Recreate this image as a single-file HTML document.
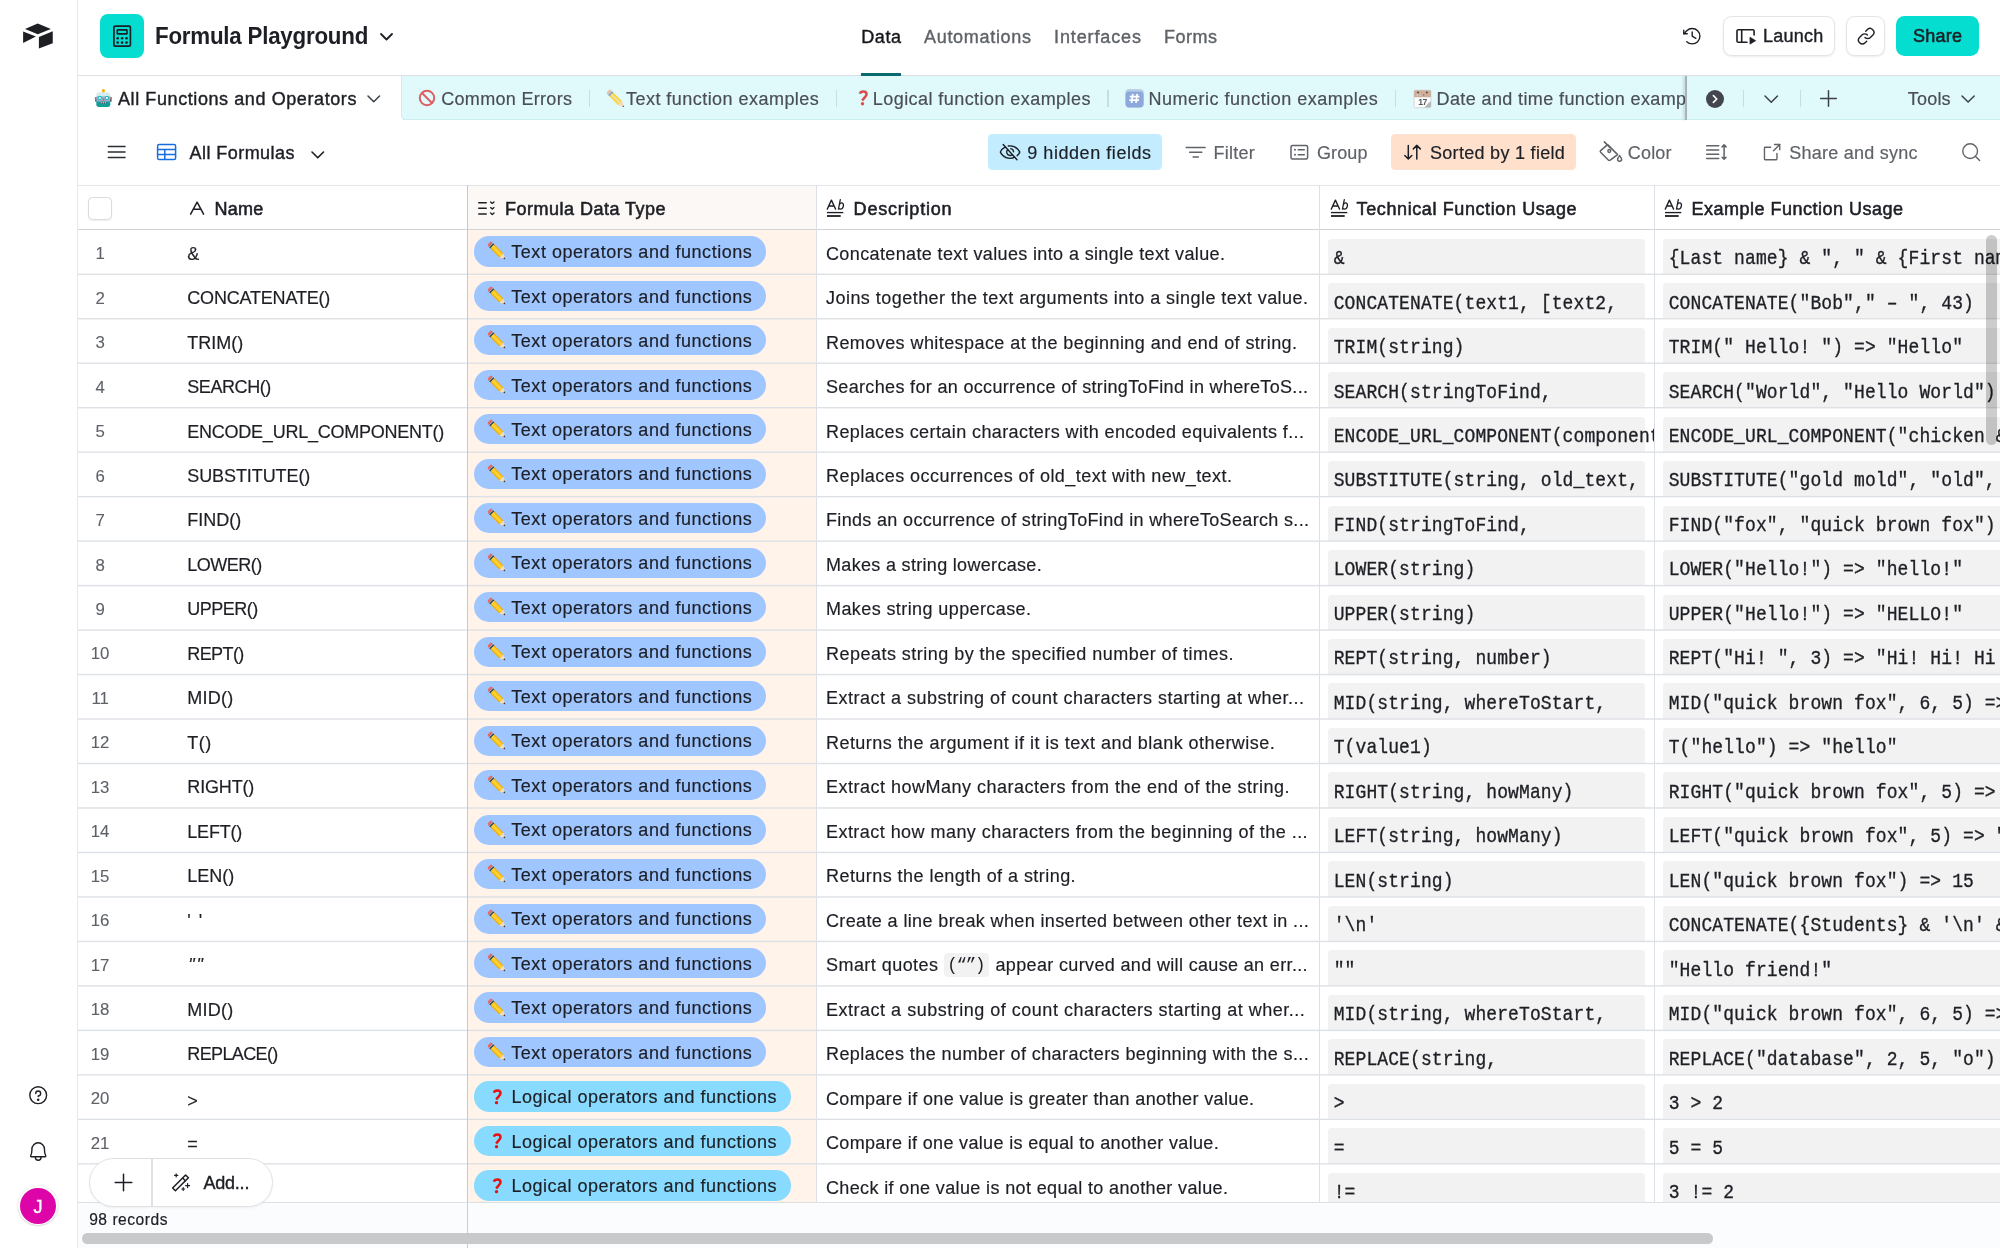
<!DOCTYPE html>
<html><head><meta charset="utf-8"><title>Formula Playground - Airtable</title>
<style>
html,body{margin:0;padding:0;}
body{width:2000px;height:1248px;overflow:hidden;background:#fff;font-family:"Liberation Sans", sans-serif;position:relative;color:#1d1f25;}
.b{position:absolute;box-sizing:border-box;}
.t{position:absolute;white-space:pre;display:block;}
svg{position:absolute;overflow:visible;}
#root{position:absolute;left:0;top:0;width:2000px;height:1248px;will-change:transform;}
</style></head><body><div id="root">
<div class="b" style="left:0.00px;top:0.00px;width:77.90px;height:1248.00px;background:#fff;border-right:1.8px solid #e6e8eb;"></div>
<svg style="left:22.00px;top:22.00px;" width="32.00" height="28.00" viewBox="22 22 32 28"><path d="M25 29 L37.75 23.4 L50.9 29 L37.75 34.3 Z" fill="#1d1f25"/><path d="M23.1 31.6 L35.9 36.6 L23.1 42.9 Z" fill="#1d1f25"/><path d="M38.9 37 L52.75 31.3 L52.75 43.3 L38.9 48.6 Z" fill="#1d1f25"/></svg>
<div class="b" style="left:78.40px;top:75.00px;width:1922.00px;height:1.30px;background:#dcdfe3;"></div>
<div class="b" style="left:100.00px;top:13.70px;width:44.30px;height:44.30px;background:#05ddd1;border-radius:8px;"></div>
<svg style="left:100.00px;top:13.70px;" width="44.30" height="44.30" viewBox="100 13.7 44.3 44.3"><rect x="113.9" y="25.9" width="16.5" height="19.9" rx="1.2" fill="none" stroke="#1d1f25" stroke-width="1.7"/><rect x="117.3" y="29.6" width="9.7" height="4" rx="0.5" fill="none" stroke="#1d1f25" stroke-width="1.6"/><circle cx="117.7" cy="38" r="1.3" fill="#1d1f25"/><circle cx="122.1" cy="38" r="1.3" fill="#1d1f25"/><circle cx="126.5" cy="38" r="1.3" fill="#1d1f25"/><circle cx="117.7" cy="42.3" r="1.3" fill="#1d1f25"/><circle cx="122.1" cy="42.3" r="1.3" fill="#1d1f25"/><circle cx="126.5" cy="42.3" r="1.3" fill="#1d1f25"/></svg>
<span class="t" style="left:155.20px;top:20.43px;height:31px;line-height:31px;font-size:24px;color:#1d1f25;font-weight:700;letter-spacing:-0.250px;transform:scaleX(0.931);transform-origin:0 50%;">Formula Playground</span>
<svg style="left:378.50px;top:31.75px;" width="15.00" height="9.50" viewBox="-7.5 -4.75 15 9.5"><path d="M-5.5 -2.75 L0 2.75 L5.5 -2.75" fill="none" stroke="#1d1f25" stroke-width="1.8" stroke-linecap="round" stroke-linejoin="round"/></svg>
<span class="t" style="left:861.30px;top:25.82px;height:23px;line-height:23px;font-size:18px;color:#14161a;letter-spacing:0.559px;-webkit-text-stroke:0.4px currentColor;">Data</span>
<span class="t" style="left:924.00px;top:25.82px;height:23px;line-height:23px;font-size:18px;color:#5f6368;letter-spacing:0.694px;-webkit-text-stroke:0.4px currentColor;">Automations</span>
<span class="t" style="left:1054.00px;top:25.82px;height:23px;line-height:23px;font-size:18px;color:#5f6368;letter-spacing:0.884px;-webkit-text-stroke:0.4px currentColor;">Interfaces</span>
<span class="t" style="left:1164.00px;top:25.82px;height:23px;line-height:23px;font-size:18px;color:#5f6368;letter-spacing:0.501px;-webkit-text-stroke:0.4px currentColor;">Forms</span>
<div class="b" style="left:861.00px;top:73.00px;width:40.00px;height:2.80px;background:#0a6a6e;"></div>
<svg style="left:1681.20px;top:24.50px;" width="22.40" height="22.40" viewBox="0 0 256 256"><g fill="none" stroke="#1d1f25" stroke-width="16" stroke-linecap="round" stroke-linejoin="round"><polyline points="128 80 128 128 169.6 152"/><polyline points="71.8 99.7 31.8 99.7 31.8 59.7"/><path d="M65.8,190.2a88,88,0,1,0,0-124.4L31.8,99.7"/></g></svg>
<div class="b" style="left:1722.60px;top:15.50px;width:112.80px;height:40.30px;background:#fff;border:1.3px solid #e2e4e8;border-radius:8.5px;box-shadow:0 1px 2px rgba(0,0,0,0.08);"></div>
<svg style="left:1735.00px;top:27.00px;" width="22.00" height="18.00" viewBox="1735 27 22 18"><path d="M1747 42.3 L1738.3 42.3 Q1737 42.3 1737 41 L1737 31 Q1737 29.7 1738.3 29.7 L1752.8 29.7 Q1754.1 29.7 1754.1 31 L1754.1 35" fill="none" stroke="#1d1f25" stroke-width="1.6" stroke-linecap="round" stroke-linejoin="round"/><path d="M1741.7 29.7 L1741.7 42.3" fill="none" stroke="#1d1f25" stroke-width="1.6"/><path d="M1750 37.3 L1755.6 40.7 L1750 44.1 Z" fill="#1d1f25" stroke="#1d1f25" stroke-width="0.8" stroke-linejoin="round"/></svg>
<span class="t" style="left:1763.00px;top:24.92px;height:23px;line-height:23px;font-size:18px;color:#1d1f25;letter-spacing:0.229px;-webkit-text-stroke:0.4px currentColor;">Launch</span>
<div class="b" style="left:1845.70px;top:15.50px;width:39.80px;height:40.30px;background:#fff;border:1.3px solid #e2e4e8;border-radius:8.5px;box-shadow:0 1px 2px rgba(0,0,0,0.08);"></div>
<svg style="left:1854.50px;top:24.80px;" width="22.40" height="22.40" viewBox="0 0 256 256"><g fill="none" stroke="#1d1f25" stroke-width="16" stroke-linecap="round" stroke-linejoin="round"><path d="M122.3,71.4l19.8-19.8a44.1,44.1,0,0,1,62.3,62.3l-28.3,28.2a43.9,43.9,0,0,1-62.2,0"/><path d="M133.7,184.6l-19.8,19.8a44.1,44.1,0,0,1-62.3-62.3l28.3-28.2a43.9,43.9,0,0,1,62.2,0"/></g></svg>
<div class="b" style="left:1896.40px;top:16.00px;width:82.80px;height:39.60px;background:#05ddd1;border-radius:8.5px;"></div>
<span class="t" style="left:1913.00px;top:25.12px;height:23px;line-height:23px;font-size:18px;color:#1d1f25;letter-spacing:0.242px;-webkit-text-stroke:0.55px currentColor;">Share</span>
<div class="b" style="left:78.40px;top:76.30px;width:1922.00px;height:44.20px;background:#e0f9fb;border-bottom:1.3px solid #cbeef1;"></div>
<div class="b" style="left:78.40px;top:76.30px;width:324.20px;height:45.50px;background:#fff;border-top-right-radius:5px;"></div>
<div class="b" style="left:401.40px;top:76.30px;width:6.00px;height:44.20px;background:#e0f9fb;border-left:1.2px solid #cbeef1;border-bottom:1.3px solid #cbeef1;border-bottom-left-radius:5px;"></div>
<span class="t" style="left:118.00px;top:88.32px;height:23px;line-height:23px;font-size:18px;color:#1d1f25;letter-spacing:0.588px;-webkit-text-stroke:0.4px currentColor;">All Functions and Operators</span>
<svg style="left:366.05px;top:93.70px;" width="15.50" height="9.80" viewBox="-7.75 -4.9 15.5 9.8"><path d="M-5.75 -2.9 L0 2.9 L5.75 -2.9" fill="none" stroke="#3c4048" stroke-width="1.5" stroke-linecap="round" stroke-linejoin="round"/></svg>
<span class="t" style="left:441.20px;top:88.32px;height:23px;line-height:23px;font-size:18px;color:#4a4e55;letter-spacing:0.315px;-webkit-text-stroke:0.18px currentColor;">Common Errors</span>
<span class="t" style="left:626.00px;top:88.32px;height:23px;line-height:23px;font-size:18px;color:#4a4e55;letter-spacing:0.462px;-webkit-text-stroke:0.18px currentColor;">Text function examples</span>
<span class="t" style="left:872.80px;top:88.32px;height:23px;line-height:23px;font-size:18px;color:#4a4e55;letter-spacing:0.436px;-webkit-text-stroke:0.18px currentColor;">Logical function examples</span>
<span class="t" style="left:1148.60px;top:88.32px;height:23px;line-height:23px;font-size:18px;color:#4a4e55;letter-spacing:0.500px;-webkit-text-stroke:0.18px currentColor;">Numeric function examples</span>
<div class="b" style="left:1436.00px;top:78.00px;width:251.00px;height:40.00px;overflow:hidden;"><span class="t" style="left:0.60px;top:10.32px;height:23px;line-height:23px;font-size:18px;color:#4a4e55;letter-spacing:0.384px;-webkit-text-stroke:0.18px currentColor;">Date and time function examples</span></div>
<div class="b" style="left:589.00px;top:89.50px;width:1.30px;height:17.00px;background:#c3dfe2;"></div>
<div class="b" style="left:835.80px;top:89.50px;width:1.30px;height:17.00px;background:#c3dfe2;"></div>
<div class="b" style="left:1107.40px;top:89.50px;width:1.30px;height:17.00px;background:#c3dfe2;"></div>
<div class="b" style="left:1395.10px;top:89.50px;width:1.30px;height:17.00px;background:#c3dfe2;"></div>
<div class="b" style="left:1743.00px;top:89.50px;width:1.30px;height:17.00px;background:#c3dfe2;"></div>
<div class="b" style="left:1800.10px;top:89.50px;width:1.30px;height:17.00px;background:#c3dfe2;"></div>
<div class="b" style="left:1684.60px;top:76.30px;width:2.00px;height:44.20px;background:#a9b4b7;box-shadow:-1.5px 0 2.5px rgba(0,0,0,0.16);"></div>
<div class="b" style="left:1705.80px;top:89.80px;width:18.00px;height:18.00px;background:#43464c;border-radius:50%;"></div>
<svg style="left:1705.80px;top:89.80px;" width="18.00" height="18.00" viewBox="-9 -9 18 18"><path d="M-1.6 -3.4 L1.8 0 L-1.6 3.4" fill="none" stroke="#fff" stroke-width="1.6" stroke-linecap="round" stroke-linejoin="round"/></svg>
<svg style="left:1763.25px;top:93.70px;" width="16.50" height="10.20" viewBox="-8.25 -5.1 16.5 10.2"><path d="M-6.25 -3.1 L0 3.1 L6.25 -3.1" fill="none" stroke="#3c4048" stroke-width="1.5" stroke-linecap="round" stroke-linejoin="round"/></svg>
<svg style="left:1818.00px;top:88.30px;" width="21.00" height="21.00" viewBox="-10.5 -10.5 21 21"><path d="M-7.8 0 L7.8 0 M0 -7.8 L0 7.8" stroke="#3c4048" stroke-width="1.5" stroke-linecap="round"/></svg>
<span class="t" style="left:1907.80px;top:88.32px;height:23px;line-height:23px;font-size:18px;color:#4a4e55;letter-spacing:0.195px;-webkit-text-stroke:0.18px currentColor;">Tools</span>
<svg style="left:1960.00px;top:93.75px;" width="16.20" height="10.10" viewBox="-8.1 -5.05 16.2 10.1"><path d="M-6.1 -3.05 L0 3.05 L6.1 -3.05" fill="none" stroke="#3c4048" stroke-width="1.5" stroke-linecap="round" stroke-linejoin="round"/></svg>
<svg style="left:106.00px;top:144.00px;" width="22.00" height="16.00" viewBox="106 144 22 16"><path d="M108.3 146.4 H125 M108.3 152 H125 M108.3 157.6 H125" stroke="#2a2d33" stroke-width="1.5" stroke-linecap="round"/></svg>
<svg style="left:155.00px;top:142.00px;" width="24.00" height="20.00" viewBox="155 142 24 20"><rect x="157.6" y="144.6" width="18" height="15" rx="1.6" fill="none" stroke="#166ee1" stroke-width="1.5"/><path d="M157.6 149.6 H175.6 M157.6 154.6 H175.6 M164.8 149.6 V159.6" stroke="#166ee1" stroke-width="1.5" fill="none"/></svg>
<span class="t" style="left:189.60px;top:141.52px;height:23px;line-height:23px;font-size:18px;color:#1d1f25;letter-spacing:0.435px;-webkit-text-stroke:0.4px currentColor;">All Formulas</span>
<svg style="left:309.75px;top:149.60px;" width="15.50" height="9.80" viewBox="-7.75 -4.9 15.5 9.8"><path d="M-5.75 -2.9 L0 2.9 L5.75 -2.9" fill="none" stroke="#1d1f25" stroke-width="1.6" stroke-linecap="round" stroke-linejoin="round"/></svg>
<div class="b" style="left:988.00px;top:134.00px;width:174.30px;height:35.70px;background:#c4ecff;border-radius:4.5px;"></div>
<svg style="left:999.10px;top:140.90px;" width="22.20" height="22.20" viewBox="0 0 256 256"><g fill="none" stroke="#1d1f25" stroke-width="16" stroke-linecap="round" stroke-linejoin="round"><line x1="48" y1="40" x2="208" y2="216"/><path d="M154.9,157.6A39.6,39.6,0,0,1,128,168a40,40,0,0,1-26.9-69.6"/><path d="M74,68.6C33.2,89.2,16,128,16,128s32,72,112,72a117.9,117.9,0,0,0,54-12.6"/><path d="M208.6,169.1C230.4,149.6,240,128,240,128S208,56,128,56a123.9,123.9,0,0,0-20.7,1.7"/><path d="M135.5,88.7a39.9,39.9,0,0,1,32.3,35.5"/></g></svg>
<span class="t" style="left:1027.20px;top:141.52px;height:23px;line-height:23px;font-size:18px;color:#1d1f25;letter-spacing:0.558px;-webkit-text-stroke:0.18px currentColor;">9 hidden fields</span>
<svg style="left:1184.00px;top:145.00px;" width="24.00" height="14.00" viewBox="1184 145 24 14"><path d="M1186.2 147.4 H1205.1 M1189.6 152.2 H1201.8 M1193.1 156.9 H1198.4" stroke="#5f6368" stroke-width="1.5" stroke-linecap="round"/></svg>
<span class="t" style="left:1213.50px;top:141.52px;height:23px;line-height:23px;font-size:18px;color:#5f6368;letter-spacing:0.240px;-webkit-text-stroke:0.18px currentColor;">Filter</span>
<svg style="left:1288.00px;top:142.00px;" width="22.00" height="20.00" viewBox="1288 142 22 20"><rect x="1291" y="145.4" width="16.6" height="13.6" rx="1.5" fill="none" stroke="#5f6368" stroke-width="1.5"/><path d="M1298.3 149.8 H1304.3 M1298.3 154.7 H1304.3" stroke="#5f6368" stroke-width="1.5" stroke-linecap="round"/><circle cx="1295" cy="149.8" r="1" fill="#5f6368"/><circle cx="1295" cy="154.7" r="1" fill="#5f6368"/></svg>
<span class="t" style="left:1317.00px;top:141.52px;height:23px;line-height:23px;font-size:18px;color:#5f6368;letter-spacing:0.093px;-webkit-text-stroke:0.18px currentColor;">Group</span>
<div class="b" style="left:1390.90px;top:134.00px;width:185.20px;height:35.70px;background:#ffe0cc;border-radius:4.5px;"></div>
<svg style="left:1402.00px;top:143.00px;" width="22.00" height="19.00" viewBox="1402 143 22 19"><path d="M1408.3 145.4 V159 M1404.8 155.5 L1408.3 159 L1411.8 155.5 M1416.8 159 V145.4 M1413.3 148.9 L1416.8 145.4 L1420.3 148.9" fill="none" stroke="#1d1f25" stroke-width="1.5" stroke-linecap="round" stroke-linejoin="round"/></svg>
<span class="t" style="left:1430.00px;top:141.52px;height:23px;line-height:23px;font-size:18px;color:#1d1f25;letter-spacing:0.295px;-webkit-text-stroke:0.18px currentColor;">Sorted by 1 field</span>
<svg style="left:1597.00px;top:140.00px;" width="26.00" height="23.00" viewBox="1597 140 26 23"><g fill="none" stroke="#5f6368" stroke-width="1.5" stroke-linecap="round" stroke-linejoin="round"><path d="M1607.6 144.6 L1617.6 154.6 L1610.2 160.2 Q1609.2 160.9 1608.3 160 L1600.6 152.3 Q1599.8 151.4 1600.6 150.6 Z"/><path d="M1604.3 141.9 L1609.8 147.4"/><circle cx="1609.3" cy="151" r="1.4"/><path d="M1619.6 155.6 Q1621.6 158.2 1621.6 159.3 A2 2 0 0 1 1617.6 159.3 Q1617.6 158.2 1619.6 155.6 Z"/></g></svg>
<span class="t" style="left:1627.80px;top:141.52px;height:23px;line-height:23px;font-size:18px;color:#5f6368;letter-spacing:0.171px;-webkit-text-stroke:0.18px currentColor;">Color</span>
<svg style="left:1704.00px;top:142.00px;" width="26.00" height="20.00" viewBox="1704 142 26 20"><g fill="none" stroke="#5f6368" stroke-width="1.5" stroke-linecap="round" stroke-linejoin="round"><path d="M1706.7 145.8 H1718.7 M1706.7 150 H1718.7 M1706.7 154.2 H1718.7 M1706.7 158.4 H1718.7"/><path d="M1724.1 145 V159.2 M1722.1 146.9 L1724.1 144.9 L1726.1 146.9 M1722.1 157.3 L1724.1 159.3 L1726.1 157.3"/></g></svg>
<svg style="left:1760.90px;top:140.70px;" width="22.20" height="22.20" viewBox="0 0 256 256"><g fill="none" stroke="#5f6368" stroke-width="16" stroke-linecap="round" stroke-linejoin="round"><polyline points="216 100 216 40 156 40"/><line x1="144" y1="112" x2="216" y2="40"/><path d="M184,144v64a8,8,0,0,1-8,8H48a8,8,0,0,1-8-8V80a8,8,0,0,1,8-8h64"/></g></svg>
<span class="t" style="left:1789.20px;top:141.52px;height:23px;line-height:23px;font-size:18px;color:#5f6368;letter-spacing:0.248px;-webkit-text-stroke:0.18px currentColor;">Share and sync</span>
<svg style="left:1959.60px;top:141.40px;" width="22.40" height="22.40" viewBox="0 0 256 256"><g fill="none" stroke="#5f6368" stroke-width="16" stroke-linecap="round" stroke-linejoin="round"><circle cx="116" cy="116" r="84"/><line x1="175.4" y1="175.4" x2="224" y2="224"/></g></svg>
<div class="b" style="left:467.60px;top:185.00px;width:348.80px;height:44.50px;background:#fcf8f6;"></div>
<div class="b" style="left:467.60px;top:229.50px;width:348.80px;height:972.10px;background:#fff3ea;"></div>
<div class="b" style="left:78.40px;top:184.80px;width:1922.00px;height:1.30px;background:#e3e5e8;"></div>
<div class="b" style="left:78.40px;top:228.70px;width:1922.00px;height:1.50px;background:#d1d3d6;"></div>
<div class="b" style="left:88.30px;top:196.50px;width:23.30px;height:23.30px;background:#fff;border:1.3px solid #d8dbe0;border-radius:4.5px;box-shadow:0 1px 1.5px rgba(0,0,0,0.07);"></div>
<svg style="left:188.00px;top:199.00px;" width="18.00" height="18.00" viewBox="188 199 18 18"><path d="M190.6 214.2 L197.1 202.2 L203.6 214.2 M193.3 209.2 H200.9" fill="none" stroke="#1d1f25" stroke-width="1.5" stroke-linecap="round" stroke-linejoin="round"/></svg>
<span class="t" style="left:214.60px;top:198.22px;height:23px;line-height:23px;font-size:18px;color:#1d1f25;letter-spacing:0.195px;-webkit-text-stroke:0.55px currentColor;">Name</span>
<svg style="left:476.00px;top:199.00px;" width="22.00" height="20.00" viewBox="476 199 22 20"><path d="M478.8 202.7 H486.2 M478.8 208.3 H486.2 M478.8 213.9 H486.2" stroke="#1d1f25" stroke-width="1.55" stroke-linecap="round"/><path d="M490.6 201.9 L492.3 203.4 L494 201.9 M490.6 207.6 L492.3 209.1 L494 207.6 M490.6 213 L492.3 214.5 L494 213" fill="none" stroke="#1d1f25" stroke-width="1.35" stroke-linecap="round" stroke-linejoin="round"/></svg>
<span class="t" style="left:505.00px;top:198.32px;height:23px;line-height:23px;font-size:18px;color:#1d1f25;letter-spacing:0.491px;-webkit-text-stroke:0.55px currentColor;">Formula Data Type</span>
<svg style="left:826.00px;top:198.00px;" width="20.00" height="20.00" viewBox="826 198 20 20"><path d="M827.3 209.1 L831.4 200.1 L835.6 209.1 M828.8 206 H834" fill="none" stroke="#1d1f25" stroke-width="1.35" stroke-linejoin="round" stroke-linecap="round"/><path d="M840.3 199.7 L838.5 209 M839.3 204.6 Q840.6 202.6 842.3 203 Q843.9 203.6 843.3 206.3 Q842.6 209.2 840.3 209.1 Q838.9 208.9 838.7 207.6" fill="none" stroke="#1d1f25" stroke-width="1.3" stroke-linejoin="round" stroke-linecap="round"/><rect x="827" y="211.9" width="16.3" height="1.35" fill="#1d1f25"/><rect x="827" y="215.1" width="13.7" height="1.8" fill="#1d1f25"/></svg>
<span class="t" style="left:853.60px;top:198.32px;height:23px;line-height:23px;font-size:18px;color:#1d1f25;letter-spacing:0.796px;-webkit-text-stroke:0.55px currentColor;">Description</span>
<svg style="left:1329.50px;top:198.00px;" width="20.00" height="20.00" viewBox="1329.5 198 20 20"><path d="M1330.8 209.1 L1334.9 200.1 L1339.1 209.1 M1332.3 206 H1337.5" fill="none" stroke="#1d1f25" stroke-width="1.35" stroke-linejoin="round" stroke-linecap="round"/><path d="M1343.8 199.7 L1342.0 209 M1342.8 204.6 Q1344.1 202.6 1345.8 203 Q1347.4 203.6 1346.8 206.3 Q1346.1 209.2 1343.8 209.1 Q1342.4 208.9 1342.2 207.6" fill="none" stroke="#1d1f25" stroke-width="1.3" stroke-linejoin="round" stroke-linecap="round"/><rect x="1330.5" y="211.9" width="16.3" height="1.35" fill="#1d1f25"/><rect x="1330.5" y="215.1" width="13.7" height="1.8" fill="#1d1f25"/></svg>
<span class="t" style="left:1356.60px;top:198.32px;height:23px;line-height:23px;font-size:18px;color:#1d1f25;letter-spacing:0.604px;-webkit-text-stroke:0.55px currentColor;">Technical Function Usage</span>
<svg style="left:1664.00px;top:198.00px;" width="20.00" height="20.00" viewBox="1664 198 20 20"><path d="M1665.3 209.1 L1669.4 200.1 L1673.6 209.1 M1666.8 206 H1672" fill="none" stroke="#1d1f25" stroke-width="1.35" stroke-linejoin="round" stroke-linecap="round"/><path d="M1678.3 199.7 L1676.5 209 M1677.3 204.6 Q1678.6 202.6 1680.3 203 Q1681.9 203.6 1681.3 206.3 Q1680.6 209.2 1678.3 209.1 Q1676.9 208.9 1676.7 207.6" fill="none" stroke="#1d1f25" stroke-width="1.3" stroke-linejoin="round" stroke-linecap="round"/><rect x="1665" y="211.9" width="16.3" height="1.35" fill="#1d1f25"/><rect x="1665" y="215.1" width="13.7" height="1.8" fill="#1d1f25"/></svg>
<span class="t" style="left:1691.60px;top:198.32px;height:23px;line-height:23px;font-size:18px;color:#1d1f25;letter-spacing:0.495px;-webkit-text-stroke:0.55px currentColor;">Example Function Usage</span>
<div class="b" style="left:815.80px;top:185.00px;width:1.30px;height:1016.60px;background:#dbe0e6;"></div>
<div class="b" style="left:1318.80px;top:185.00px;width:1.30px;height:1016.60px;background:#dbe0e6;"></div>
<div class="b" style="left:1653.80px;top:185.00px;width:1.30px;height:1016.60px;background:#dbe0e6;"></div>
<div class="b" style="left:0.00px;top:0.00px;width:2000.00px;height:1201.60px;overflow:hidden;"><span class="t" style="left:100.10px;top:243.18px;height:22px;line-height:22px;font-size:16.8px;color:#5d6168;transform:translateX(-50%);-webkit-text-stroke:0.1px currentColor;">1</span><span class="t" style="left:187.30px;top:242.60px;height:23px;line-height:23px;font-size:18px;color:#1d1f25;-webkit-text-stroke:0.18px currentColor;">&amp;</span><div class="b" style="left:474.00px;top:236.33px;width:292.40px;height:30.20px;background:#a0c6ff;border-radius:15.1px;"></div><svg style="left:486.90px;top:241.48px;" width="20.00" height="20.00" viewBox="-10 -10 20 20"><g transform="scale(1.04)"><g transform="rotate(-45)"><rect x="-2.7" y="-10.8" width="5.4" height="3" rx="1.4" fill="#e96a63"/><rect x="-2.7" y="-8.6" width="5.4" height="2.4" fill="#41474f"/><rect x="-2.7" y="-8.6" width="5.4" height="0.9" fill="#a9bccc"/><rect x="-2.7" y="-6.2" width="5.4" height="12.2" fill="#f2ae00"/><rect x="-1.5" y="-6.2" width="3" height="12.2" fill="#ffd033"/><path d="M-2.7 6 L0 11.4 L2.7 6 Z" fill="#f7dcae"/><path d="M-1 9.4 L0 11.4 L1 9.4 Z" fill="#33363b"/></g></g></svg><span class="t" style="left:511.30px;top:241.10px;height:23px;line-height:23px;font-size:18px;color:#1d1f25;letter-spacing:0.532px;-webkit-text-stroke:0.18px currentColor;">Text operators and functions</span><span class="t" style="left:826.00px;top:242.60px;height:23px;line-height:23px;font-size:18px;color:#1d1f25;letter-spacing:0.370px;-webkit-text-stroke:0.18px currentColor;">Concatenate text values into a single text value.</span><div class="b" style="left:1328.40px;top:238.68px;width:317.00px;height:35.58px;background:#f2f2f2;border-radius:3.5px 3.5px 0 0;overflow:hidden;"></div><div class="b" style="left:1328.40px;top:238.68px;width:325.40px;height:35.58px;overflow:hidden;"><span class="t" style="left:5.30px;top:9.42px;height:23px;line-height:23px;font-size:18px;color:#1d1f25;font-family:'Liberation Mono', monospace;letter-spacing:0.100px;-webkit-text-stroke:0.3px currentColor;transform:scaleY(1.1);transform-origin:0 50%;">&amp;</span></div><div class="b" style="left:1663.20px;top:238.68px;width:336.80px;height:35.58px;background:#f2f2f2;border-radius:3.5px 0 0 0;overflow:hidden;"><span class="t" style="left:5.50px;top:9.42px;height:23px;line-height:23px;font-size:18px;color:#1d1f25;font-family:'Liberation Mono', monospace;letter-spacing:0.100px;-webkit-text-stroke:0.3px currentColor;transform:scaleY(1.1);transform-origin:0 50%;">{Last name} &amp; ", " &amp; {First name}</span></div>
<span class="t" style="left:100.10px;top:287.66px;height:22px;line-height:22px;font-size:16.8px;color:#5d6168;transform:translateX(-50%);-webkit-text-stroke:0.1px currentColor;">2</span><span class="t" style="left:187.30px;top:287.08px;height:23px;line-height:23px;font-size:18px;color:#1d1f25;letter-spacing:-0.194px;-webkit-text-stroke:0.18px currentColor;">CONCATENATE()</span><div class="b" style="left:474.00px;top:280.81px;width:292.40px;height:30.20px;background:#a0c6ff;border-radius:15.1px;"></div><svg style="left:486.90px;top:285.96px;" width="20.00" height="20.00" viewBox="-10 -10 20 20"><g transform="scale(1.04)"><g transform="rotate(-45)"><rect x="-2.7" y="-10.8" width="5.4" height="3" rx="1.4" fill="#e96a63"/><rect x="-2.7" y="-8.6" width="5.4" height="2.4" fill="#41474f"/><rect x="-2.7" y="-8.6" width="5.4" height="0.9" fill="#a9bccc"/><rect x="-2.7" y="-6.2" width="5.4" height="12.2" fill="#f2ae00"/><rect x="-1.5" y="-6.2" width="3" height="12.2" fill="#ffd033"/><path d="M-2.7 6 L0 11.4 L2.7 6 Z" fill="#f7dcae"/><path d="M-1 9.4 L0 11.4 L1 9.4 Z" fill="#33363b"/></g></g></svg><span class="t" style="left:511.30px;top:285.58px;height:23px;line-height:23px;font-size:18px;color:#1d1f25;letter-spacing:0.532px;-webkit-text-stroke:0.18px currentColor;">Text operators and functions</span><span class="t" style="left:826.00px;top:287.08px;height:23px;line-height:23px;font-size:18px;color:#1d1f25;letter-spacing:0.461px;-webkit-text-stroke:0.18px currentColor;">Joins together the text arguments into a single text value.</span><div class="b" style="left:1328.40px;top:283.16px;width:317.00px;height:35.58px;background:#f2f2f2;border-radius:3.5px 3.5px 0 0;overflow:hidden;"></div><div class="b" style="left:1328.40px;top:283.16px;width:325.40px;height:35.58px;overflow:hidden;"><span class="t" style="left:5.30px;top:9.42px;height:23px;line-height:23px;font-size:18px;color:#1d1f25;font-family:'Liberation Mono', monospace;letter-spacing:0.100px;-webkit-text-stroke:0.3px currentColor;transform:scaleY(1.1);transform-origin:0 50%;">CONCATENATE(text1, [text2,</span></div><div class="b" style="left:1663.20px;top:283.16px;width:336.80px;height:35.58px;background:#f2f2f2;border-radius:3.5px 0 0 0;overflow:hidden;"><span class="t" style="left:5.50px;top:9.42px;height:23px;line-height:23px;font-size:18px;color:#1d1f25;font-family:'Liberation Mono', monospace;letter-spacing:0.100px;-webkit-text-stroke:0.3px currentColor;transform:scaleY(1.1);transform-origin:0 50%;">CONCATENATE("Bob"," – ", 43)</span></div>
<span class="t" style="left:100.10px;top:332.14px;height:22px;line-height:22px;font-size:16.8px;color:#5d6168;transform:translateX(-50%);-webkit-text-stroke:0.1px currentColor;">3</span><span class="t" style="left:187.30px;top:331.56px;height:23px;line-height:23px;font-size:18px;color:#1d1f25;letter-spacing:0.004px;-webkit-text-stroke:0.18px currentColor;">TRIM()</span><div class="b" style="left:474.00px;top:325.29px;width:292.40px;height:30.20px;background:#a0c6ff;border-radius:15.1px;"></div><svg style="left:486.90px;top:330.44px;" width="20.00" height="20.00" viewBox="-10 -10 20 20"><g transform="scale(1.04)"><g transform="rotate(-45)"><rect x="-2.7" y="-10.8" width="5.4" height="3" rx="1.4" fill="#e96a63"/><rect x="-2.7" y="-8.6" width="5.4" height="2.4" fill="#41474f"/><rect x="-2.7" y="-8.6" width="5.4" height="0.9" fill="#a9bccc"/><rect x="-2.7" y="-6.2" width="5.4" height="12.2" fill="#f2ae00"/><rect x="-1.5" y="-6.2" width="3" height="12.2" fill="#ffd033"/><path d="M-2.7 6 L0 11.4 L2.7 6 Z" fill="#f7dcae"/><path d="M-1 9.4 L0 11.4 L1 9.4 Z" fill="#33363b"/></g></g></svg><span class="t" style="left:511.30px;top:330.06px;height:23px;line-height:23px;font-size:18px;color:#1d1f25;letter-spacing:0.532px;-webkit-text-stroke:0.18px currentColor;">Text operators and functions</span><span class="t" style="left:826.00px;top:331.56px;height:23px;line-height:23px;font-size:18px;color:#1d1f25;letter-spacing:0.429px;-webkit-text-stroke:0.18px currentColor;">Removes whitespace at the beginning and end of string.</span><div class="b" style="left:1328.40px;top:327.64px;width:317.00px;height:35.58px;background:#f2f2f2;border-radius:3.5px 3.5px 0 0;overflow:hidden;"></div><div class="b" style="left:1328.40px;top:327.64px;width:325.40px;height:35.58px;overflow:hidden;"><span class="t" style="left:5.30px;top:9.42px;height:23px;line-height:23px;font-size:18px;color:#1d1f25;font-family:'Liberation Mono', monospace;letter-spacing:0.100px;-webkit-text-stroke:0.3px currentColor;transform:scaleY(1.1);transform-origin:0 50%;">TRIM(string)</span></div><div class="b" style="left:1663.20px;top:327.64px;width:336.80px;height:35.58px;background:#f2f2f2;border-radius:3.5px 0 0 0;overflow:hidden;"><span class="t" style="left:5.50px;top:9.42px;height:23px;line-height:23px;font-size:18px;color:#1d1f25;font-family:'Liberation Mono', monospace;letter-spacing:0.100px;-webkit-text-stroke:0.3px currentColor;transform:scaleY(1.1);transform-origin:0 50%;">TRIM(" Hello! ") =&gt; "Hello"</span></div>
<span class="t" style="left:100.10px;top:376.62px;height:22px;line-height:22px;font-size:16.8px;color:#5d6168;transform:translateX(-50%);-webkit-text-stroke:0.1px currentColor;">4</span><span class="t" style="left:187.30px;top:376.04px;height:23px;line-height:23px;font-size:18px;color:#1d1f25;letter-spacing:-0.429px;-webkit-text-stroke:0.18px currentColor;">SEARCH()</span><div class="b" style="left:474.00px;top:369.76px;width:292.40px;height:30.20px;background:#a0c6ff;border-radius:15.1px;"></div><svg style="left:486.90px;top:374.91px;" width="20.00" height="20.00" viewBox="-10 -10 20 20"><g transform="scale(1.04)"><g transform="rotate(-45)"><rect x="-2.7" y="-10.8" width="5.4" height="3" rx="1.4" fill="#e96a63"/><rect x="-2.7" y="-8.6" width="5.4" height="2.4" fill="#41474f"/><rect x="-2.7" y="-8.6" width="5.4" height="0.9" fill="#a9bccc"/><rect x="-2.7" y="-6.2" width="5.4" height="12.2" fill="#f2ae00"/><rect x="-1.5" y="-6.2" width="3" height="12.2" fill="#ffd033"/><path d="M-2.7 6 L0 11.4 L2.7 6 Z" fill="#f7dcae"/><path d="M-1 9.4 L0 11.4 L1 9.4 Z" fill="#33363b"/></g></g></svg><span class="t" style="left:511.30px;top:374.54px;height:23px;line-height:23px;font-size:18px;color:#1d1f25;letter-spacing:0.532px;-webkit-text-stroke:0.18px currentColor;">Text operators and functions</span><span class="t" style="left:826.00px;top:376.04px;height:23px;line-height:23px;font-size:18px;color:#1d1f25;letter-spacing:0.335px;-webkit-text-stroke:0.18px currentColor;">Searches for an occurrence of stringToFind in whereToS...</span><div class="b" style="left:1328.40px;top:372.11px;width:317.00px;height:35.58px;background:#f2f2f2;border-radius:3.5px 3.5px 0 0;overflow:hidden;"></div><div class="b" style="left:1328.40px;top:372.11px;width:325.40px;height:35.58px;overflow:hidden;"><span class="t" style="left:5.30px;top:9.42px;height:23px;line-height:23px;font-size:18px;color:#1d1f25;font-family:'Liberation Mono', monospace;letter-spacing:0.100px;-webkit-text-stroke:0.3px currentColor;transform:scaleY(1.1);transform-origin:0 50%;">SEARCH(stringToFind,</span></div><div class="b" style="left:1663.20px;top:372.11px;width:336.80px;height:35.58px;background:#f2f2f2;border-radius:3.5px 0 0 0;overflow:hidden;"><span class="t" style="left:5.50px;top:9.42px;height:23px;line-height:23px;font-size:18px;color:#1d1f25;font-family:'Liberation Mono', monospace;letter-spacing:0.100px;-webkit-text-stroke:0.3px currentColor;transform:scaleY(1.1);transform-origin:0 50%;">SEARCH("World", "Hello World") =&gt; 7</span></div>
<span class="t" style="left:100.10px;top:421.09px;height:22px;line-height:22px;font-size:16.8px;color:#5d6168;transform:translateX(-50%);-webkit-text-stroke:0.1px currentColor;">5</span><span class="t" style="left:187.30px;top:420.52px;height:23px;line-height:23px;font-size:18px;color:#1d1f25;letter-spacing:-0.240px;-webkit-text-stroke:0.18px currentColor;">ENCODE_URL_COMPONENT()</span><div class="b" style="left:474.00px;top:414.24px;width:292.40px;height:30.20px;background:#a0c6ff;border-radius:15.1px;"></div><svg style="left:486.90px;top:419.39px;" width="20.00" height="20.00" viewBox="-10 -10 20 20"><g transform="scale(1.04)"><g transform="rotate(-45)"><rect x="-2.7" y="-10.8" width="5.4" height="3" rx="1.4" fill="#e96a63"/><rect x="-2.7" y="-8.6" width="5.4" height="2.4" fill="#41474f"/><rect x="-2.7" y="-8.6" width="5.4" height="0.9" fill="#a9bccc"/><rect x="-2.7" y="-6.2" width="5.4" height="12.2" fill="#f2ae00"/><rect x="-1.5" y="-6.2" width="3" height="12.2" fill="#ffd033"/><path d="M-2.7 6 L0 11.4 L2.7 6 Z" fill="#f7dcae"/><path d="M-1 9.4 L0 11.4 L1 9.4 Z" fill="#33363b"/></g></g></svg><span class="t" style="left:511.30px;top:419.02px;height:23px;line-height:23px;font-size:18px;color:#1d1f25;letter-spacing:0.532px;-webkit-text-stroke:0.18px currentColor;">Text operators and functions</span><span class="t" style="left:826.00px;top:420.52px;height:23px;line-height:23px;font-size:18px;color:#1d1f25;letter-spacing:0.406px;-webkit-text-stroke:0.18px currentColor;">Replaces certain characters with encoded equivalents f...</span><div class="b" style="left:1328.40px;top:416.59px;width:317.00px;height:35.58px;background:#f2f2f2;border-radius:3.5px 3.5px 0 0;overflow:hidden;"></div><div class="b" style="left:1328.40px;top:416.59px;width:325.40px;height:35.58px;overflow:hidden;"><span class="t" style="left:5.30px;top:9.42px;height:23px;line-height:23px;font-size:18px;color:#1d1f25;font-family:'Liberation Mono', monospace;letter-spacing:0.100px;-webkit-text-stroke:0.3px currentColor;transform:scaleY(1.1);transform-origin:0 50%;">ENCODE_URL_COMPONENT(component_string)</span></div><div class="b" style="left:1663.20px;top:416.59px;width:336.80px;height:35.58px;background:#f2f2f2;border-radius:3.5px 0 0 0;overflow:hidden;"><span class="t" style="left:5.50px;top:9.42px;height:23px;line-height:23px;font-size:18px;color:#1d1f25;font-family:'Liberation Mono', monospace;letter-spacing:0.100px;-webkit-text-stroke:0.3px currentColor;transform:scaleY(1.1);transform-origin:0 50%;">ENCODE_URL_COMPONENT("chicken &amp; waffles")</span></div>
<span class="t" style="left:100.10px;top:465.57px;height:22px;line-height:22px;font-size:16.8px;color:#5d6168;transform:translateX(-50%);-webkit-text-stroke:0.1px currentColor;">6</span><span class="t" style="left:187.30px;top:464.99px;height:23px;line-height:23px;font-size:18px;color:#1d1f25;letter-spacing:-0.091px;-webkit-text-stroke:0.18px currentColor;">SUBSTITUTE()</span><div class="b" style="left:474.00px;top:458.72px;width:292.40px;height:30.20px;background:#a0c6ff;border-radius:15.1px;"></div><svg style="left:486.90px;top:463.87px;" width="20.00" height="20.00" viewBox="-10 -10 20 20"><g transform="scale(1.04)"><g transform="rotate(-45)"><rect x="-2.7" y="-10.8" width="5.4" height="3" rx="1.4" fill="#e96a63"/><rect x="-2.7" y="-8.6" width="5.4" height="2.4" fill="#41474f"/><rect x="-2.7" y="-8.6" width="5.4" height="0.9" fill="#a9bccc"/><rect x="-2.7" y="-6.2" width="5.4" height="12.2" fill="#f2ae00"/><rect x="-1.5" y="-6.2" width="3" height="12.2" fill="#ffd033"/><path d="M-2.7 6 L0 11.4 L2.7 6 Z" fill="#f7dcae"/><path d="M-1 9.4 L0 11.4 L1 9.4 Z" fill="#33363b"/></g></g></svg><span class="t" style="left:511.30px;top:463.49px;height:23px;line-height:23px;font-size:18px;color:#1d1f25;letter-spacing:0.532px;-webkit-text-stroke:0.18px currentColor;">Text operators and functions</span><span class="t" style="left:826.00px;top:464.99px;height:23px;line-height:23px;font-size:18px;color:#1d1f25;letter-spacing:0.452px;-webkit-text-stroke:0.18px currentColor;">Replaces occurrences of old_text with new_text.</span><div class="b" style="left:1328.40px;top:461.07px;width:317.00px;height:35.58px;background:#f2f2f2;border-radius:3.5px 3.5px 0 0;overflow:hidden;"></div><div class="b" style="left:1328.40px;top:461.07px;width:325.40px;height:35.58px;overflow:hidden;"><span class="t" style="left:5.30px;top:9.42px;height:23px;line-height:23px;font-size:18px;color:#1d1f25;font-family:'Liberation Mono', monospace;letter-spacing:0.100px;-webkit-text-stroke:0.3px currentColor;transform:scaleY(1.1);transform-origin:0 50%;">SUBSTITUTE(string, old_text,</span></div><div class="b" style="left:1663.20px;top:461.07px;width:336.80px;height:35.58px;background:#f2f2f2;border-radius:3.5px 0 0 0;overflow:hidden;"><span class="t" style="left:5.50px;top:9.42px;height:23px;line-height:23px;font-size:18px;color:#1d1f25;font-family:'Liberation Mono', monospace;letter-spacing:0.100px;-webkit-text-stroke:0.3px currentColor;transform:scaleY(1.1);transform-origin:0 50%;">SUBSTITUTE("gold mold", "old", "ew")</span></div>
<span class="t" style="left:100.10px;top:510.05px;height:22px;line-height:22px;font-size:16.8px;color:#5d6168;transform:translateX(-50%);-webkit-text-stroke:0.1px currentColor;">7</span><span class="t" style="left:187.30px;top:509.47px;height:23px;line-height:23px;font-size:18px;color:#1d1f25;letter-spacing:0.003px;-webkit-text-stroke:0.18px currentColor;">FIND()</span><div class="b" style="left:474.00px;top:503.20px;width:292.40px;height:30.20px;background:#a0c6ff;border-radius:15.1px;"></div><svg style="left:486.90px;top:508.35px;" width="20.00" height="20.00" viewBox="-10 -10 20 20"><g transform="scale(1.04)"><g transform="rotate(-45)"><rect x="-2.7" y="-10.8" width="5.4" height="3" rx="1.4" fill="#e96a63"/><rect x="-2.7" y="-8.6" width="5.4" height="2.4" fill="#41474f"/><rect x="-2.7" y="-8.6" width="5.4" height="0.9" fill="#a9bccc"/><rect x="-2.7" y="-6.2" width="5.4" height="12.2" fill="#f2ae00"/><rect x="-1.5" y="-6.2" width="3" height="12.2" fill="#ffd033"/><path d="M-2.7 6 L0 11.4 L2.7 6 Z" fill="#f7dcae"/><path d="M-1 9.4 L0 11.4 L1 9.4 Z" fill="#33363b"/></g></g></svg><span class="t" style="left:511.30px;top:507.97px;height:23px;line-height:23px;font-size:18px;color:#1d1f25;letter-spacing:0.532px;-webkit-text-stroke:0.18px currentColor;">Text operators and functions</span><span class="t" style="left:826.00px;top:509.47px;height:23px;line-height:23px;font-size:18px;color:#1d1f25;letter-spacing:0.335px;-webkit-text-stroke:0.18px currentColor;">Finds an occurrence of stringToFind in whereToSearch s...</span><div class="b" style="left:1328.40px;top:505.55px;width:317.00px;height:35.58px;background:#f2f2f2;border-radius:3.5px 3.5px 0 0;overflow:hidden;"></div><div class="b" style="left:1328.40px;top:505.55px;width:325.40px;height:35.58px;overflow:hidden;"><span class="t" style="left:5.30px;top:9.42px;height:23px;line-height:23px;font-size:18px;color:#1d1f25;font-family:'Liberation Mono', monospace;letter-spacing:0.100px;-webkit-text-stroke:0.3px currentColor;transform:scaleY(1.1);transform-origin:0 50%;">FIND(stringToFind,</span></div><div class="b" style="left:1663.20px;top:505.55px;width:336.80px;height:35.58px;background:#f2f2f2;border-radius:3.5px 0 0 0;overflow:hidden;"><span class="t" style="left:5.50px;top:9.42px;height:23px;line-height:23px;font-size:18px;color:#1d1f25;font-family:'Liberation Mono', monospace;letter-spacing:0.100px;-webkit-text-stroke:0.3px currentColor;transform:scaleY(1.1);transform-origin:0 50%;">FIND("fox", "quick brown fox") =&gt; 13</span></div>
<span class="t" style="left:100.10px;top:554.53px;height:22px;line-height:22px;font-size:16.8px;color:#5d6168;transform:translateX(-50%);-webkit-text-stroke:0.1px currentColor;">8</span><span class="t" style="left:187.30px;top:553.95px;height:23px;line-height:23px;font-size:18px;color:#1d1f25;letter-spacing:-0.499px;-webkit-text-stroke:0.18px currentColor;">LOWER()</span><div class="b" style="left:474.00px;top:547.68px;width:292.40px;height:30.20px;background:#a0c6ff;border-radius:15.1px;"></div><svg style="left:486.90px;top:552.83px;" width="20.00" height="20.00" viewBox="-10 -10 20 20"><g transform="scale(1.04)"><g transform="rotate(-45)"><rect x="-2.7" y="-10.8" width="5.4" height="3" rx="1.4" fill="#e96a63"/><rect x="-2.7" y="-8.6" width="5.4" height="2.4" fill="#41474f"/><rect x="-2.7" y="-8.6" width="5.4" height="0.9" fill="#a9bccc"/><rect x="-2.7" y="-6.2" width="5.4" height="12.2" fill="#f2ae00"/><rect x="-1.5" y="-6.2" width="3" height="12.2" fill="#ffd033"/><path d="M-2.7 6 L0 11.4 L2.7 6 Z" fill="#f7dcae"/><path d="M-1 9.4 L0 11.4 L1 9.4 Z" fill="#33363b"/></g></g></svg><span class="t" style="left:511.30px;top:552.45px;height:23px;line-height:23px;font-size:18px;color:#1d1f25;letter-spacing:0.532px;-webkit-text-stroke:0.18px currentColor;">Text operators and functions</span><span class="t" style="left:826.00px;top:553.95px;height:23px;line-height:23px;font-size:18px;color:#1d1f25;letter-spacing:0.317px;-webkit-text-stroke:0.18px currentColor;">Makes a string lowercase.</span><div class="b" style="left:1328.40px;top:550.03px;width:317.00px;height:35.58px;background:#f2f2f2;border-radius:3.5px 3.5px 0 0;overflow:hidden;"></div><div class="b" style="left:1328.40px;top:550.03px;width:325.40px;height:35.58px;overflow:hidden;"><span class="t" style="left:5.30px;top:9.42px;height:23px;line-height:23px;font-size:18px;color:#1d1f25;font-family:'Liberation Mono', monospace;letter-spacing:0.100px;-webkit-text-stroke:0.3px currentColor;transform:scaleY(1.1);transform-origin:0 50%;">LOWER(string)</span></div><div class="b" style="left:1663.20px;top:550.03px;width:336.80px;height:35.58px;background:#f2f2f2;border-radius:3.5px 0 0 0;overflow:hidden;"><span class="t" style="left:5.50px;top:9.42px;height:23px;line-height:23px;font-size:18px;color:#1d1f25;font-family:'Liberation Mono', monospace;letter-spacing:0.100px;-webkit-text-stroke:0.3px currentColor;transform:scaleY(1.1);transform-origin:0 50%;">LOWER("Hello!") =&gt; "hello!"</span></div>
<span class="t" style="left:100.10px;top:599.01px;height:22px;line-height:22px;font-size:16.8px;color:#5d6168;transform:translateX(-50%);-webkit-text-stroke:0.1px currentColor;">9</span><span class="t" style="left:187.30px;top:598.43px;height:23px;line-height:23px;font-size:18px;color:#1d1f25;letter-spacing:-0.501px;-webkit-text-stroke:0.18px currentColor;">UPPER()</span><div class="b" style="left:474.00px;top:592.15px;width:292.40px;height:30.20px;background:#a0c6ff;border-radius:15.1px;"></div><svg style="left:486.90px;top:597.30px;" width="20.00" height="20.00" viewBox="-10 -10 20 20"><g transform="scale(1.04)"><g transform="rotate(-45)"><rect x="-2.7" y="-10.8" width="5.4" height="3" rx="1.4" fill="#e96a63"/><rect x="-2.7" y="-8.6" width="5.4" height="2.4" fill="#41474f"/><rect x="-2.7" y="-8.6" width="5.4" height="0.9" fill="#a9bccc"/><rect x="-2.7" y="-6.2" width="5.4" height="12.2" fill="#f2ae00"/><rect x="-1.5" y="-6.2" width="3" height="12.2" fill="#ffd033"/><path d="M-2.7 6 L0 11.4 L2.7 6 Z" fill="#f7dcae"/><path d="M-1 9.4 L0 11.4 L1 9.4 Z" fill="#33363b"/></g></g></svg><span class="t" style="left:511.30px;top:596.93px;height:23px;line-height:23px;font-size:18px;color:#1d1f25;letter-spacing:0.532px;-webkit-text-stroke:0.18px currentColor;">Text operators and functions</span><span class="t" style="left:826.00px;top:598.43px;height:23px;line-height:23px;font-size:18px;color:#1d1f25;letter-spacing:0.405px;-webkit-text-stroke:0.18px currentColor;">Makes string uppercase.</span><div class="b" style="left:1328.40px;top:594.50px;width:317.00px;height:35.58px;background:#f2f2f2;border-radius:3.5px 3.5px 0 0;overflow:hidden;"></div><div class="b" style="left:1328.40px;top:594.50px;width:325.40px;height:35.58px;overflow:hidden;"><span class="t" style="left:5.30px;top:9.42px;height:23px;line-height:23px;font-size:18px;color:#1d1f25;font-family:'Liberation Mono', monospace;letter-spacing:0.100px;-webkit-text-stroke:0.3px currentColor;transform:scaleY(1.1);transform-origin:0 50%;">UPPER(string)</span></div><div class="b" style="left:1663.20px;top:594.50px;width:336.80px;height:35.58px;background:#f2f2f2;border-radius:3.5px 0 0 0;overflow:hidden;"><span class="t" style="left:5.50px;top:9.42px;height:23px;line-height:23px;font-size:18px;color:#1d1f25;font-family:'Liberation Mono', monospace;letter-spacing:0.100px;-webkit-text-stroke:0.3px currentColor;transform:scaleY(1.1);transform-origin:0 50%;">UPPER("Hello!") =&gt; "HELLO!"</span></div>
<span class="t" style="left:100.10px;top:643.48px;height:22px;line-height:22px;font-size:16.8px;color:#5d6168;transform:translateX(-50%);-webkit-text-stroke:0.1px currentColor;">10</span><span class="t" style="left:187.30px;top:642.91px;height:23px;line-height:23px;font-size:18px;color:#1d1f25;letter-spacing:-0.599px;-webkit-text-stroke:0.18px currentColor;">REPT()</span><div class="b" style="left:474.00px;top:636.63px;width:292.40px;height:30.20px;background:#a0c6ff;border-radius:15.1px;"></div><svg style="left:486.90px;top:641.78px;" width="20.00" height="20.00" viewBox="-10 -10 20 20"><g transform="scale(1.04)"><g transform="rotate(-45)"><rect x="-2.7" y="-10.8" width="5.4" height="3" rx="1.4" fill="#e96a63"/><rect x="-2.7" y="-8.6" width="5.4" height="2.4" fill="#41474f"/><rect x="-2.7" y="-8.6" width="5.4" height="0.9" fill="#a9bccc"/><rect x="-2.7" y="-6.2" width="5.4" height="12.2" fill="#f2ae00"/><rect x="-1.5" y="-6.2" width="3" height="12.2" fill="#ffd033"/><path d="M-2.7 6 L0 11.4 L2.7 6 Z" fill="#f7dcae"/><path d="M-1 9.4 L0 11.4 L1 9.4 Z" fill="#33363b"/></g></g></svg><span class="t" style="left:511.30px;top:641.41px;height:23px;line-height:23px;font-size:18px;color:#1d1f25;letter-spacing:0.532px;-webkit-text-stroke:0.18px currentColor;">Text operators and functions</span><span class="t" style="left:826.00px;top:642.91px;height:23px;line-height:23px;font-size:18px;color:#1d1f25;letter-spacing:0.473px;-webkit-text-stroke:0.18px currentColor;">Repeats string by the specified number of times.</span><div class="b" style="left:1328.40px;top:638.98px;width:317.00px;height:35.58px;background:#f2f2f2;border-radius:3.5px 3.5px 0 0;overflow:hidden;"></div><div class="b" style="left:1328.40px;top:638.98px;width:325.40px;height:35.58px;overflow:hidden;"><span class="t" style="left:5.30px;top:9.42px;height:23px;line-height:23px;font-size:18px;color:#1d1f25;font-family:'Liberation Mono', monospace;letter-spacing:0.100px;-webkit-text-stroke:0.3px currentColor;transform:scaleY(1.1);transform-origin:0 50%;">REPT(string, number)</span></div><div class="b" style="left:1663.20px;top:638.98px;width:336.80px;height:35.58px;background:#f2f2f2;border-radius:3.5px 0 0 0;overflow:hidden;"><span class="t" style="left:5.50px;top:9.42px;height:23px;line-height:23px;font-size:18px;color:#1d1f25;font-family:'Liberation Mono', monospace;letter-spacing:0.100px;-webkit-text-stroke:0.3px currentColor;transform:scaleY(1.1);transform-origin:0 50%;">REPT("Hi! ", 3) =&gt; "Hi! Hi! Hi! "</span></div>
<span class="t" style="left:100.10px;top:687.96px;height:22px;line-height:22px;font-size:16.8px;color:#5d6168;transform:translateX(-50%);-webkit-text-stroke:0.1px currentColor;">11</span><span class="t" style="left:187.30px;top:687.38px;height:23px;line-height:23px;font-size:18px;color:#1d1f25;letter-spacing:0.254px;-webkit-text-stroke:0.18px currentColor;">MID()</span><div class="b" style="left:474.00px;top:681.11px;width:292.40px;height:30.20px;background:#a0c6ff;border-radius:15.1px;"></div><svg style="left:486.90px;top:686.26px;" width="20.00" height="20.00" viewBox="-10 -10 20 20"><g transform="scale(1.04)"><g transform="rotate(-45)"><rect x="-2.7" y="-10.8" width="5.4" height="3" rx="1.4" fill="#e96a63"/><rect x="-2.7" y="-8.6" width="5.4" height="2.4" fill="#41474f"/><rect x="-2.7" y="-8.6" width="5.4" height="0.9" fill="#a9bccc"/><rect x="-2.7" y="-6.2" width="5.4" height="12.2" fill="#f2ae00"/><rect x="-1.5" y="-6.2" width="3" height="12.2" fill="#ffd033"/><path d="M-2.7 6 L0 11.4 L2.7 6 Z" fill="#f7dcae"/><path d="M-1 9.4 L0 11.4 L1 9.4 Z" fill="#33363b"/></g></g></svg><span class="t" style="left:511.30px;top:685.88px;height:23px;line-height:23px;font-size:18px;color:#1d1f25;letter-spacing:0.532px;-webkit-text-stroke:0.18px currentColor;">Text operators and functions</span><span class="t" style="left:826.00px;top:687.38px;height:23px;line-height:23px;font-size:18px;color:#1d1f25;letter-spacing:0.496px;-webkit-text-stroke:0.18px currentColor;">Extract a substring of count characters starting at wher...</span><div class="b" style="left:1328.40px;top:683.46px;width:317.00px;height:35.58px;background:#f2f2f2;border-radius:3.5px 3.5px 0 0;overflow:hidden;"></div><div class="b" style="left:1328.40px;top:683.46px;width:325.40px;height:35.58px;overflow:hidden;"><span class="t" style="left:5.30px;top:9.42px;height:23px;line-height:23px;font-size:18px;color:#1d1f25;font-family:'Liberation Mono', monospace;letter-spacing:0.100px;-webkit-text-stroke:0.3px currentColor;transform:scaleY(1.1);transform-origin:0 50%;">MID(string, whereToStart,</span></div><div class="b" style="left:1663.20px;top:683.46px;width:336.80px;height:35.58px;background:#f2f2f2;border-radius:3.5px 0 0 0;overflow:hidden;"><span class="t" style="left:5.50px;top:9.42px;height:23px;line-height:23px;font-size:18px;color:#1d1f25;font-family:'Liberation Mono', monospace;letter-spacing:0.100px;-webkit-text-stroke:0.3px currentColor;transform:scaleY(1.1);transform-origin:0 50%;">MID("quick brown fox", 6, 5) =&gt; "brown"</span></div>
<span class="t" style="left:100.10px;top:732.44px;height:22px;line-height:22px;font-size:16.8px;color:#5d6168;transform:translateX(-50%);-webkit-text-stroke:0.1px currentColor;">12</span><span class="t" style="left:187.30px;top:731.86px;height:23px;line-height:23px;font-size:18px;color:#1d1f25;letter-spacing:0.508px;-webkit-text-stroke:0.18px currentColor;">T()</span><div class="b" style="left:474.00px;top:725.59px;width:292.40px;height:30.20px;background:#a0c6ff;border-radius:15.1px;"></div><svg style="left:486.90px;top:730.74px;" width="20.00" height="20.00" viewBox="-10 -10 20 20"><g transform="scale(1.04)"><g transform="rotate(-45)"><rect x="-2.7" y="-10.8" width="5.4" height="3" rx="1.4" fill="#e96a63"/><rect x="-2.7" y="-8.6" width="5.4" height="2.4" fill="#41474f"/><rect x="-2.7" y="-8.6" width="5.4" height="0.9" fill="#a9bccc"/><rect x="-2.7" y="-6.2" width="5.4" height="12.2" fill="#f2ae00"/><rect x="-1.5" y="-6.2" width="3" height="12.2" fill="#ffd033"/><path d="M-2.7 6 L0 11.4 L2.7 6 Z" fill="#f7dcae"/><path d="M-1 9.4 L0 11.4 L1 9.4 Z" fill="#33363b"/></g></g></svg><span class="t" style="left:511.30px;top:730.36px;height:23px;line-height:23px;font-size:18px;color:#1d1f25;letter-spacing:0.532px;-webkit-text-stroke:0.18px currentColor;">Text operators and functions</span><span class="t" style="left:826.00px;top:731.86px;height:23px;line-height:23px;font-size:18px;color:#1d1f25;letter-spacing:0.453px;-webkit-text-stroke:0.18px currentColor;">Returns the argument if it is text and blank otherwise.</span><div class="b" style="left:1328.40px;top:727.94px;width:317.00px;height:35.58px;background:#f2f2f2;border-radius:3.5px 3.5px 0 0;overflow:hidden;"></div><div class="b" style="left:1328.40px;top:727.94px;width:325.40px;height:35.58px;overflow:hidden;"><span class="t" style="left:5.30px;top:9.42px;height:23px;line-height:23px;font-size:18px;color:#1d1f25;font-family:'Liberation Mono', monospace;letter-spacing:0.100px;-webkit-text-stroke:0.3px currentColor;transform:scaleY(1.1);transform-origin:0 50%;">T(value1)</span></div><div class="b" style="left:1663.20px;top:727.94px;width:336.80px;height:35.58px;background:#f2f2f2;border-radius:3.5px 0 0 0;overflow:hidden;"><span class="t" style="left:5.50px;top:9.42px;height:23px;line-height:23px;font-size:18px;color:#1d1f25;font-family:'Liberation Mono', monospace;letter-spacing:0.100px;-webkit-text-stroke:0.3px currentColor;transform:scaleY(1.1);transform-origin:0 50%;">T("hello") =&gt; "hello"</span></div>
<span class="t" style="left:100.10px;top:776.92px;height:22px;line-height:22px;font-size:16.8px;color:#5d6168;transform:translateX(-50%);-webkit-text-stroke:0.1px currentColor;">13</span><span class="t" style="left:187.30px;top:776.34px;height:23px;line-height:23px;font-size:18px;color:#1d1f25;letter-spacing:-0.164px;-webkit-text-stroke:0.18px currentColor;">RIGHT()</span><div class="b" style="left:474.00px;top:770.07px;width:292.40px;height:30.20px;background:#a0c6ff;border-radius:15.1px;"></div><svg style="left:486.90px;top:775.22px;" width="20.00" height="20.00" viewBox="-10 -10 20 20"><g transform="scale(1.04)"><g transform="rotate(-45)"><rect x="-2.7" y="-10.8" width="5.4" height="3" rx="1.4" fill="#e96a63"/><rect x="-2.7" y="-8.6" width="5.4" height="2.4" fill="#41474f"/><rect x="-2.7" y="-8.6" width="5.4" height="0.9" fill="#a9bccc"/><rect x="-2.7" y="-6.2" width="5.4" height="12.2" fill="#f2ae00"/><rect x="-1.5" y="-6.2" width="3" height="12.2" fill="#ffd033"/><path d="M-2.7 6 L0 11.4 L2.7 6 Z" fill="#f7dcae"/><path d="M-1 9.4 L0 11.4 L1 9.4 Z" fill="#33363b"/></g></g></svg><span class="t" style="left:511.30px;top:774.84px;height:23px;line-height:23px;font-size:18px;color:#1d1f25;letter-spacing:0.532px;-webkit-text-stroke:0.18px currentColor;">Text operators and functions</span><span class="t" style="left:826.00px;top:776.34px;height:23px;line-height:23px;font-size:18px;color:#1d1f25;letter-spacing:0.498px;-webkit-text-stroke:0.18px currentColor;">Extract howMany characters from the end of the string.</span><div class="b" style="left:1328.40px;top:772.42px;width:317.00px;height:35.58px;background:#f2f2f2;border-radius:3.5px 3.5px 0 0;overflow:hidden;"></div><div class="b" style="left:1328.40px;top:772.42px;width:325.40px;height:35.58px;overflow:hidden;"><span class="t" style="left:5.30px;top:9.42px;height:23px;line-height:23px;font-size:18px;color:#1d1f25;font-family:'Liberation Mono', monospace;letter-spacing:0.100px;-webkit-text-stroke:0.3px currentColor;transform:scaleY(1.1);transform-origin:0 50%;">RIGHT(string, howMany)</span></div><div class="b" style="left:1663.20px;top:772.42px;width:336.80px;height:35.58px;background:#f2f2f2;border-radius:3.5px 0 0 0;overflow:hidden;"><span class="t" style="left:5.50px;top:9.42px;height:23px;line-height:23px;font-size:18px;color:#1d1f25;font-family:'Liberation Mono', monospace;letter-spacing:0.100px;-webkit-text-stroke:0.3px currentColor;transform:scaleY(1.1);transform-origin:0 50%;">RIGHT("quick brown fox", 5) =&gt; "n fox"</span></div>
<span class="t" style="left:100.10px;top:821.40px;height:22px;line-height:22px;font-size:16.8px;color:#5d6168;transform:translateX(-50%);-webkit-text-stroke:0.1px currentColor;">14</span><span class="t" style="left:187.30px;top:820.82px;height:23px;line-height:23px;font-size:18px;color:#1d1f25;letter-spacing:-0.199px;-webkit-text-stroke:0.18px currentColor;">LEFT()</span><div class="b" style="left:474.00px;top:814.54px;width:292.40px;height:30.20px;background:#a0c6ff;border-radius:15.1px;"></div><svg style="left:486.90px;top:819.69px;" width="20.00" height="20.00" viewBox="-10 -10 20 20"><g transform="scale(1.04)"><g transform="rotate(-45)"><rect x="-2.7" y="-10.8" width="5.4" height="3" rx="1.4" fill="#e96a63"/><rect x="-2.7" y="-8.6" width="5.4" height="2.4" fill="#41474f"/><rect x="-2.7" y="-8.6" width="5.4" height="0.9" fill="#a9bccc"/><rect x="-2.7" y="-6.2" width="5.4" height="12.2" fill="#f2ae00"/><rect x="-1.5" y="-6.2" width="3" height="12.2" fill="#ffd033"/><path d="M-2.7 6 L0 11.4 L2.7 6 Z" fill="#f7dcae"/><path d="M-1 9.4 L0 11.4 L1 9.4 Z" fill="#33363b"/></g></g></svg><span class="t" style="left:511.30px;top:819.32px;height:23px;line-height:23px;font-size:18px;color:#1d1f25;letter-spacing:0.532px;-webkit-text-stroke:0.18px currentColor;">Text operators and functions</span><span class="t" style="left:826.00px;top:820.82px;height:23px;line-height:23px;font-size:18px;color:#1d1f25;letter-spacing:0.453px;-webkit-text-stroke:0.18px currentColor;">Extract how many characters from the beginning of the ...</span><div class="b" style="left:1328.40px;top:816.89px;width:317.00px;height:35.58px;background:#f2f2f2;border-radius:3.5px 3.5px 0 0;overflow:hidden;"></div><div class="b" style="left:1328.40px;top:816.89px;width:325.40px;height:35.58px;overflow:hidden;"><span class="t" style="left:5.30px;top:9.42px;height:23px;line-height:23px;font-size:18px;color:#1d1f25;font-family:'Liberation Mono', monospace;letter-spacing:0.100px;-webkit-text-stroke:0.3px currentColor;transform:scaleY(1.1);transform-origin:0 50%;">LEFT(string, howMany)</span></div><div class="b" style="left:1663.20px;top:816.89px;width:336.80px;height:35.58px;background:#f2f2f2;border-radius:3.5px 0 0 0;overflow:hidden;"><span class="t" style="left:5.50px;top:9.42px;height:23px;line-height:23px;font-size:18px;color:#1d1f25;font-family:'Liberation Mono', monospace;letter-spacing:0.100px;-webkit-text-stroke:0.3px currentColor;transform:scaleY(1.1);transform-origin:0 50%;">LEFT("quick brown fox", 5) =&gt; "quick"</span></div>
<span class="t" style="left:100.10px;top:865.87px;height:22px;line-height:22px;font-size:16.8px;color:#5d6168;transform:translateX(-50%);-webkit-text-stroke:0.1px currentColor;">15</span><span class="t" style="left:187.30px;top:865.30px;height:23px;line-height:23px;font-size:18px;color:#1d1f25;letter-spacing:-0.001px;-webkit-text-stroke:0.18px currentColor;">LEN()</span><div class="b" style="left:474.00px;top:859.02px;width:292.40px;height:30.20px;background:#a0c6ff;border-radius:15.1px;"></div><svg style="left:486.90px;top:864.17px;" width="20.00" height="20.00" viewBox="-10 -10 20 20"><g transform="scale(1.04)"><g transform="rotate(-45)"><rect x="-2.7" y="-10.8" width="5.4" height="3" rx="1.4" fill="#e96a63"/><rect x="-2.7" y="-8.6" width="5.4" height="2.4" fill="#41474f"/><rect x="-2.7" y="-8.6" width="5.4" height="0.9" fill="#a9bccc"/><rect x="-2.7" y="-6.2" width="5.4" height="12.2" fill="#f2ae00"/><rect x="-1.5" y="-6.2" width="3" height="12.2" fill="#ffd033"/><path d="M-2.7 6 L0 11.4 L2.7 6 Z" fill="#f7dcae"/><path d="M-1 9.4 L0 11.4 L1 9.4 Z" fill="#33363b"/></g></g></svg><span class="t" style="left:511.30px;top:863.80px;height:23px;line-height:23px;font-size:18px;color:#1d1f25;letter-spacing:0.532px;-webkit-text-stroke:0.18px currentColor;">Text operators and functions</span><span class="t" style="left:826.00px;top:865.30px;height:23px;line-height:23px;font-size:18px;color:#1d1f25;letter-spacing:0.449px;-webkit-text-stroke:0.18px currentColor;">Returns the length of a string.</span><div class="b" style="left:1328.40px;top:861.37px;width:317.00px;height:35.58px;background:#f2f2f2;border-radius:3.5px 3.5px 0 0;overflow:hidden;"></div><div class="b" style="left:1328.40px;top:861.37px;width:325.40px;height:35.58px;overflow:hidden;"><span class="t" style="left:5.30px;top:9.42px;height:23px;line-height:23px;font-size:18px;color:#1d1f25;font-family:'Liberation Mono', monospace;letter-spacing:0.100px;-webkit-text-stroke:0.3px currentColor;transform:scaleY(1.1);transform-origin:0 50%;">LEN(string)</span></div><div class="b" style="left:1663.20px;top:861.37px;width:336.80px;height:35.58px;background:#f2f2f2;border-radius:3.5px 0 0 0;overflow:hidden;"><span class="t" style="left:5.50px;top:9.42px;height:23px;line-height:23px;font-size:18px;color:#1d1f25;font-family:'Liberation Mono', monospace;letter-spacing:0.100px;-webkit-text-stroke:0.3px currentColor;transform:scaleY(1.1);transform-origin:0 50%;">LEN("quick brown fox") =&gt; 15</span></div>
<span class="t" style="left:100.10px;top:910.35px;height:22px;line-height:22px;font-size:16.8px;color:#5d6168;transform:translateX(-50%);-webkit-text-stroke:0.1px currentColor;">16</span><span class="t" style="left:187.30px;top:909.77px;height:23px;line-height:23px;font-size:18px;color:#1d1f25;letter-spacing:1.563px;-webkit-text-stroke:0.18px currentColor;">' '</span><div class="b" style="left:474.00px;top:903.50px;width:292.40px;height:30.20px;background:#a0c6ff;border-radius:15.1px;"></div><svg style="left:486.90px;top:908.65px;" width="20.00" height="20.00" viewBox="-10 -10 20 20"><g transform="scale(1.04)"><g transform="rotate(-45)"><rect x="-2.7" y="-10.8" width="5.4" height="3" rx="1.4" fill="#e96a63"/><rect x="-2.7" y="-8.6" width="5.4" height="2.4" fill="#41474f"/><rect x="-2.7" y="-8.6" width="5.4" height="0.9" fill="#a9bccc"/><rect x="-2.7" y="-6.2" width="5.4" height="12.2" fill="#f2ae00"/><rect x="-1.5" y="-6.2" width="3" height="12.2" fill="#ffd033"/><path d="M-2.7 6 L0 11.4 L2.7 6 Z" fill="#f7dcae"/><path d="M-1 9.4 L0 11.4 L1 9.4 Z" fill="#33363b"/></g></g></svg><span class="t" style="left:511.30px;top:908.27px;height:23px;line-height:23px;font-size:18px;color:#1d1f25;letter-spacing:0.532px;-webkit-text-stroke:0.18px currentColor;">Text operators and functions</span><span class="t" style="left:826.00px;top:909.77px;height:23px;line-height:23px;font-size:18px;color:#1d1f25;letter-spacing:0.371px;-webkit-text-stroke:0.18px currentColor;">Create a line break when inserted between other text in ...</span><div class="b" style="left:1328.40px;top:905.85px;width:317.00px;height:35.58px;background:#f2f2f2;border-radius:3.5px 3.5px 0 0;overflow:hidden;"></div><div class="b" style="left:1328.40px;top:905.85px;width:325.40px;height:35.58px;overflow:hidden;"><span class="t" style="left:5.30px;top:9.42px;height:23px;line-height:23px;font-size:18px;color:#1d1f25;font-family:'Liberation Mono', monospace;letter-spacing:0.100px;-webkit-text-stroke:0.3px currentColor;transform:scaleY(1.1);transform-origin:0 50%;">'\n'</span></div><div class="b" style="left:1663.20px;top:905.85px;width:336.80px;height:35.58px;background:#f2f2f2;border-radius:3.5px 0 0 0;overflow:hidden;"><span class="t" style="left:5.50px;top:9.42px;height:23px;line-height:23px;font-size:18px;color:#1d1f25;font-family:'Liberation Mono', monospace;letter-spacing:0.100px;-webkit-text-stroke:0.3px currentColor;transform:scaleY(1.1);transform-origin:0 50%;">CONCATENATE({Students} &amp; '\n' &amp; {Teachers})</span></div>
<span class="t" style="left:100.10px;top:954.83px;height:22px;line-height:22px;font-size:16.8px;color:#5d6168;transform:translateX(-50%);-webkit-text-stroke:0.1px currentColor;">17</span><span class="t" style="left:188.30px;top:954.25px;height:23px;line-height:23px;font-size:18px;color:#1d1f25;letter-spacing:1.721px;-webkit-text-stroke:0.18px currentColor;font-style:italic;">""</span><div class="b" style="left:474.00px;top:947.98px;width:292.40px;height:30.20px;background:#a0c6ff;border-radius:15.1px;"></div><svg style="left:486.90px;top:953.13px;" width="20.00" height="20.00" viewBox="-10 -10 20 20"><g transform="scale(1.04)"><g transform="rotate(-45)"><rect x="-2.7" y="-10.8" width="5.4" height="3" rx="1.4" fill="#e96a63"/><rect x="-2.7" y="-8.6" width="5.4" height="2.4" fill="#41474f"/><rect x="-2.7" y="-8.6" width="5.4" height="0.9" fill="#a9bccc"/><rect x="-2.7" y="-6.2" width="5.4" height="12.2" fill="#f2ae00"/><rect x="-1.5" y="-6.2" width="3" height="12.2" fill="#ffd033"/><path d="M-2.7 6 L0 11.4 L2.7 6 Z" fill="#f7dcae"/><path d="M-1 9.4 L0 11.4 L1 9.4 Z" fill="#33363b"/></g></g></svg><span class="t" style="left:511.30px;top:952.75px;height:23px;line-height:23px;font-size:18px;color:#1d1f25;letter-spacing:0.532px;-webkit-text-stroke:0.18px currentColor;">Text operators and functions</span><span class="t" style="left:826.00px;top:954.05px;height:23px;line-height:23px;font-size:18px;color:#1d1f25;letter-spacing:0.450px;-webkit-text-stroke:0.18px currentColor;">Smart quotes</span><div class="b" style="left:943.60px;top:953.23px;width:45.30px;height:23.60px;background:#f2f2f2;border-radius:4px;"></div><span class="t" style="left:947.30px;top:954.04px;height:23px;line-height:23px;font-size:17.5px;color:#1d1f25;font-family:'Liberation Mono', monospace;letter-spacing:-1.269px;">(“”)</span><span class="t" style="left:995.50px;top:954.05px;height:23px;line-height:23px;font-size:18px;color:#1d1f25;letter-spacing:0.349px;-webkit-text-stroke:0.18px currentColor;">appear curved and will cause an err...</span><div class="b" style="left:1328.40px;top:950.33px;width:317.00px;height:35.58px;background:#f2f2f2;border-radius:3.5px 3.5px 0 0;overflow:hidden;"></div><div class="b" style="left:1328.40px;top:950.33px;width:325.40px;height:35.58px;overflow:hidden;"><span class="t" style="left:5.30px;top:9.42px;height:23px;line-height:23px;font-size:18px;color:#1d1f25;font-family:'Liberation Mono', monospace;letter-spacing:0.100px;-webkit-text-stroke:0.3px currentColor;transform:scaleY(1.1);transform-origin:0 50%;">""</span></div><div class="b" style="left:1663.20px;top:950.33px;width:336.80px;height:35.58px;background:#f2f2f2;border-radius:3.5px 0 0 0;overflow:hidden;"><span class="t" style="left:5.50px;top:9.42px;height:23px;line-height:23px;font-size:18px;color:#1d1f25;font-family:'Liberation Mono', monospace;letter-spacing:0.100px;-webkit-text-stroke:0.3px currentColor;transform:scaleY(1.1);transform-origin:0 50%;">"Hello friend!"</span></div>
<span class="t" style="left:100.10px;top:999.31px;height:22px;line-height:22px;font-size:16.8px;color:#5d6168;transform:translateX(-50%);-webkit-text-stroke:0.1px currentColor;">18</span><span class="t" style="left:187.30px;top:998.73px;height:23px;line-height:23px;font-size:18px;color:#1d1f25;letter-spacing:0.254px;-webkit-text-stroke:0.18px currentColor;">MID()</span><div class="b" style="left:474.00px;top:992.46px;width:292.40px;height:30.20px;background:#a0c6ff;border-radius:15.1px;"></div><svg style="left:486.90px;top:997.61px;" width="20.00" height="20.00" viewBox="-10 -10 20 20"><g transform="scale(1.04)"><g transform="rotate(-45)"><rect x="-2.7" y="-10.8" width="5.4" height="3" rx="1.4" fill="#e96a63"/><rect x="-2.7" y="-8.6" width="5.4" height="2.4" fill="#41474f"/><rect x="-2.7" y="-8.6" width="5.4" height="0.9" fill="#a9bccc"/><rect x="-2.7" y="-6.2" width="5.4" height="12.2" fill="#f2ae00"/><rect x="-1.5" y="-6.2" width="3" height="12.2" fill="#ffd033"/><path d="M-2.7 6 L0 11.4 L2.7 6 Z" fill="#f7dcae"/><path d="M-1 9.4 L0 11.4 L1 9.4 Z" fill="#33363b"/></g></g></svg><span class="t" style="left:511.30px;top:997.23px;height:23px;line-height:23px;font-size:18px;color:#1d1f25;letter-spacing:0.532px;-webkit-text-stroke:0.18px currentColor;">Text operators and functions</span><span class="t" style="left:826.00px;top:998.73px;height:23px;line-height:23px;font-size:18px;color:#1d1f25;letter-spacing:0.510px;-webkit-text-stroke:0.18px currentColor;">Extract a substring of count characters starting at wher...</span><div class="b" style="left:1328.40px;top:994.81px;width:317.00px;height:35.58px;background:#f2f2f2;border-radius:3.5px 3.5px 0 0;overflow:hidden;"></div><div class="b" style="left:1328.40px;top:994.81px;width:325.40px;height:35.58px;overflow:hidden;"><span class="t" style="left:5.30px;top:9.42px;height:23px;line-height:23px;font-size:18px;color:#1d1f25;font-family:'Liberation Mono', monospace;letter-spacing:0.100px;-webkit-text-stroke:0.3px currentColor;transform:scaleY(1.1);transform-origin:0 50%;">MID(string, whereToStart,</span></div><div class="b" style="left:1663.20px;top:994.81px;width:336.80px;height:35.58px;background:#f2f2f2;border-radius:3.5px 0 0 0;overflow:hidden;"><span class="t" style="left:5.50px;top:9.42px;height:23px;line-height:23px;font-size:18px;color:#1d1f25;font-family:'Liberation Mono', monospace;letter-spacing:0.100px;-webkit-text-stroke:0.3px currentColor;transform:scaleY(1.1);transform-origin:0 50%;">MID("quick brown fox", 6, 5) =&gt; "brown"</span></div>
<span class="t" style="left:100.10px;top:1043.79px;height:22px;line-height:22px;font-size:16.8px;color:#5d6168;transform:translateX(-50%);-webkit-text-stroke:0.1px currentColor;">19</span><span class="t" style="left:187.30px;top:1043.21px;height:23px;line-height:23px;font-size:18px;color:#1d1f25;letter-spacing:-0.628px;-webkit-text-stroke:0.18px currentColor;">REPLACE()</span><div class="b" style="left:474.00px;top:1036.93px;width:292.40px;height:30.20px;background:#a0c6ff;border-radius:15.1px;"></div><svg style="left:486.90px;top:1042.08px;" width="20.00" height="20.00" viewBox="-10 -10 20 20"><g transform="scale(1.04)"><g transform="rotate(-45)"><rect x="-2.7" y="-10.8" width="5.4" height="3" rx="1.4" fill="#e96a63"/><rect x="-2.7" y="-8.6" width="5.4" height="2.4" fill="#41474f"/><rect x="-2.7" y="-8.6" width="5.4" height="0.9" fill="#a9bccc"/><rect x="-2.7" y="-6.2" width="5.4" height="12.2" fill="#f2ae00"/><rect x="-1.5" y="-6.2" width="3" height="12.2" fill="#ffd033"/><path d="M-2.7 6 L0 11.4 L2.7 6 Z" fill="#f7dcae"/><path d="M-1 9.4 L0 11.4 L1 9.4 Z" fill="#33363b"/></g></g></svg><span class="t" style="left:511.30px;top:1041.71px;height:23px;line-height:23px;font-size:18px;color:#1d1f25;letter-spacing:0.532px;-webkit-text-stroke:0.18px currentColor;">Text operators and functions</span><span class="t" style="left:826.00px;top:1043.21px;height:23px;line-height:23px;font-size:18px;color:#1d1f25;letter-spacing:0.420px;-webkit-text-stroke:0.18px currentColor;">Replaces the number of characters beginning with the s...</span><div class="b" style="left:1328.40px;top:1039.28px;width:317.00px;height:35.58px;background:#f2f2f2;border-radius:3.5px 3.5px 0 0;overflow:hidden;"></div><div class="b" style="left:1328.40px;top:1039.28px;width:325.40px;height:35.58px;overflow:hidden;"><span class="t" style="left:5.30px;top:9.42px;height:23px;line-height:23px;font-size:18px;color:#1d1f25;font-family:'Liberation Mono', monospace;letter-spacing:0.100px;-webkit-text-stroke:0.3px currentColor;transform:scaleY(1.1);transform-origin:0 50%;">REPLACE(string,</span></div><div class="b" style="left:1663.20px;top:1039.28px;width:336.80px;height:35.58px;background:#f2f2f2;border-radius:3.5px 0 0 0;overflow:hidden;"><span class="t" style="left:5.50px;top:9.42px;height:23px;line-height:23px;font-size:18px;color:#1d1f25;font-family:'Liberation Mono', monospace;letter-spacing:0.100px;-webkit-text-stroke:0.3px currentColor;transform:scaleY(1.1);transform-origin:0 50%;">REPLACE("database", 2, 5, "o") =&gt; "dose"</span></div>
<span class="t" style="left:100.10px;top:1088.26px;height:22px;line-height:22px;font-size:16.8px;color:#5d6168;transform:translateX(-50%);-webkit-text-stroke:0.1px currentColor;">20</span><span class="t" style="left:187.30px;top:1089.99px;height:23px;line-height:23px;font-size:18px;color:#1d1f25;-webkit-text-stroke:0.18px currentColor;">&gt;</span><div class="b" style="left:474.00px;top:1081.41px;width:317.00px;height:30.20px;background:#88dbff;border-radius:15.1px;"></div><svg style="left:491.00px;top:1087.76px;" width="12.00" height="18.00" viewBox="-6 -9 12 18"><g transform="scale(0.97)" opacity="1"><path d="M-3.1 -4.3 Q-2.6 -6.6 0.4 -6.6 Q3.6 -6.6 3.6 -3.9 Q3.6 -2.4 1.6 -0.4 L-0.9 2.6" fill="none" stroke="#e6120f" stroke-width="2.6" stroke-linecap="butt" stroke-linejoin="round"/><circle cx="-0.5" cy="5.9" r="1.7" fill="#e6120f"/></g></svg><span class="t" style="left:511.60px;top:1086.19px;height:23px;line-height:23px;font-size:18px;color:#1d1f25;letter-spacing:0.488px;-webkit-text-stroke:0.18px currentColor;">Logical operators and functions</span><span class="t" style="left:826.00px;top:1087.69px;height:23px;line-height:23px;font-size:18px;color:#1d1f25;letter-spacing:0.355px;-webkit-text-stroke:0.18px currentColor;">Compare if one value is greater than another value.</span><div class="b" style="left:1328.40px;top:1083.76px;width:317.00px;height:35.58px;background:#f2f2f2;border-radius:3.5px 3.5px 0 0;overflow:hidden;"></div><div class="b" style="left:1328.40px;top:1083.76px;width:325.40px;height:35.58px;overflow:hidden;"><span class="t" style="left:5.30px;top:9.42px;height:23px;line-height:23px;font-size:18px;color:#1d1f25;font-family:'Liberation Mono', monospace;letter-spacing:0.100px;-webkit-text-stroke:0.3px currentColor;transform:scaleY(1.1);transform-origin:0 50%;">&gt;</span></div><div class="b" style="left:1663.20px;top:1083.76px;width:336.80px;height:35.58px;background:#f2f2f2;border-radius:3.5px 0 0 0;overflow:hidden;"><span class="t" style="left:5.50px;top:9.42px;height:23px;line-height:23px;font-size:18px;color:#1d1f25;font-family:'Liberation Mono', monospace;letter-spacing:0.100px;-webkit-text-stroke:0.3px currentColor;transform:scaleY(1.1);transform-origin:0 50%;">3 &gt; 2</span></div>
<span class="t" style="left:100.10px;top:1132.74px;height:22px;line-height:22px;font-size:16.8px;color:#5d6168;transform:translateX(-50%);-webkit-text-stroke:0.1px currentColor;">21</span><span class="t" style="left:187.30px;top:1133.26px;height:23px;line-height:23px;font-size:18px;color:#1d1f25;-webkit-text-stroke:0.18px currentColor;">=</span><div class="b" style="left:474.00px;top:1125.89px;width:317.00px;height:30.20px;background:#88dbff;border-radius:15.1px;"></div><svg style="left:491.00px;top:1132.24px;" width="12.00" height="18.00" viewBox="-6 -9 12 18"><g transform="scale(0.97)" opacity="1"><path d="M-3.1 -4.3 Q-2.6 -6.6 0.4 -6.6 Q3.6 -6.6 3.6 -3.9 Q3.6 -2.4 1.6 -0.4 L-0.9 2.6" fill="none" stroke="#e6120f" stroke-width="2.6" stroke-linecap="butt" stroke-linejoin="round"/><circle cx="-0.5" cy="5.9" r="1.7" fill="#e6120f"/></g></svg><span class="t" style="left:511.60px;top:1130.66px;height:23px;line-height:23px;font-size:18px;color:#1d1f25;letter-spacing:0.488px;-webkit-text-stroke:0.18px currentColor;">Logical operators and functions</span><span class="t" style="left:826.00px;top:1132.16px;height:23px;line-height:23px;font-size:18px;color:#1d1f25;letter-spacing:0.336px;-webkit-text-stroke:0.18px currentColor;">Compare if one value is equal to another value.</span><div class="b" style="left:1328.40px;top:1128.24px;width:317.00px;height:35.58px;background:#f2f2f2;border-radius:3.5px 3.5px 0 0;overflow:hidden;"></div><div class="b" style="left:1328.40px;top:1128.24px;width:325.40px;height:35.58px;overflow:hidden;"><span class="t" style="left:5.30px;top:9.42px;height:23px;line-height:23px;font-size:18px;color:#1d1f25;font-family:'Liberation Mono', monospace;letter-spacing:0.100px;-webkit-text-stroke:0.3px currentColor;transform:scaleY(1.1);transform-origin:0 50%;">=</span></div><div class="b" style="left:1663.20px;top:1128.24px;width:336.80px;height:35.58px;background:#f2f2f2;border-radius:3.5px 0 0 0;overflow:hidden;"><span class="t" style="left:5.50px;top:9.42px;height:23px;line-height:23px;font-size:18px;color:#1d1f25;font-family:'Liberation Mono', monospace;letter-spacing:0.100px;-webkit-text-stroke:0.3px currentColor;transform:scaleY(1.1);transform-origin:0 50%;">5 = 5</span></div>
<span class="t" style="left:100.10px;top:1177.22px;height:22px;line-height:22px;font-size:16.8px;color:#5d6168;transform:translateX(-50%);-webkit-text-stroke:0.1px currentColor;">22</span><span class="t" style="left:187.30px;top:1176.64px;height:23px;line-height:23px;font-size:18px;color:#1d1f25;letter-spacing:-1.513px;-webkit-text-stroke:0.18px currentColor;">!=</span><div class="b" style="left:474.00px;top:1170.37px;width:317.00px;height:30.20px;background:#88dbff;border-radius:15.1px;"></div><svg style="left:491.00px;top:1176.72px;" width="12.00" height="18.00" viewBox="-6 -9 12 18"><g transform="scale(0.97)" opacity="1"><path d="M-3.1 -4.3 Q-2.6 -6.6 0.4 -6.6 Q3.6 -6.6 3.6 -3.9 Q3.6 -2.4 1.6 -0.4 L-0.9 2.6" fill="none" stroke="#e6120f" stroke-width="2.6" stroke-linecap="butt" stroke-linejoin="round"/><circle cx="-0.5" cy="5.9" r="1.7" fill="#e6120f"/></g></svg><span class="t" style="left:511.60px;top:1175.14px;height:23px;line-height:23px;font-size:18px;color:#1d1f25;letter-spacing:0.488px;-webkit-text-stroke:0.18px currentColor;">Logical operators and functions</span><span class="t" style="left:826.00px;top:1176.64px;height:23px;line-height:23px;font-size:18px;color:#1d1f25;letter-spacing:0.368px;-webkit-text-stroke:0.18px currentColor;">Check if one value is not equal to another value.</span><div class="b" style="left:1328.40px;top:1172.72px;width:317.00px;height:28.88px;background:#f2f2f2;border-radius:3.5px 3.5px 0 0;overflow:hidden;"></div><div class="b" style="left:1328.40px;top:1172.72px;width:325.40px;height:28.88px;overflow:hidden;"><span class="t" style="left:5.30px;top:9.42px;height:23px;line-height:23px;font-size:18px;color:#1d1f25;font-family:'Liberation Mono', monospace;letter-spacing:0.100px;-webkit-text-stroke:0.3px currentColor;transform:scaleY(1.1);transform-origin:0 50%;">!=</span></div><div class="b" style="left:1663.20px;top:1172.72px;width:336.80px;height:28.88px;background:#f2f2f2;border-radius:3.5px 0 0 0;overflow:hidden;"><span class="t" style="left:5.50px;top:9.42px;height:23px;line-height:23px;font-size:18px;color:#1d1f25;font-family:'Liberation Mono', monospace;letter-spacing:0.100px;-webkit-text-stroke:0.3px currentColor;transform:scaleY(1.1);transform-origin:0 50%;">3 != 2</span></div></div>
<svg style="left:78.40px;top:0.00px;" width="1922.00" height="1248.00" viewBox="78.4 0 1922 1248"><rect x="78.4" y="273.56" width="1922" height="1.4" fill="#dde1e5"/><rect x="78.4" y="318.04" width="1922" height="1.4" fill="#dde1e5"/><rect x="78.4" y="362.51" width="1922" height="1.4" fill="#dde1e5"/><rect x="78.4" y="406.99" width="1922" height="1.4" fill="#dde1e5"/><rect x="78.4" y="451.47" width="1922" height="1.4" fill="#dde1e5"/><rect x="78.4" y="495.95" width="1922" height="1.4" fill="#dde1e5"/><rect x="78.4" y="540.43" width="1922" height="1.4" fill="#dde1e5"/><rect x="78.4" y="584.90" width="1922" height="1.4" fill="#dde1e5"/><rect x="78.4" y="629.38" width="1922" height="1.4" fill="#dde1e5"/><rect x="78.4" y="673.86" width="1922" height="1.4" fill="#dde1e5"/><rect x="78.4" y="718.34" width="1922" height="1.4" fill="#dde1e5"/><rect x="78.4" y="762.82" width="1922" height="1.4" fill="#dde1e5"/><rect x="78.4" y="807.29" width="1922" height="1.4" fill="#dde1e5"/><rect x="78.4" y="851.77" width="1922" height="1.4" fill="#dde1e5"/><rect x="78.4" y="896.25" width="1922" height="1.4" fill="#dde1e5"/><rect x="78.4" y="940.73" width="1922" height="1.4" fill="#dde1e5"/><rect x="78.4" y="985.21" width="1922" height="1.4" fill="#dde1e5"/><rect x="78.4" y="1029.68" width="1922" height="1.4" fill="#dde1e5"/><rect x="78.4" y="1074.16" width="1922" height="1.4" fill="#dde1e5"/><rect x="78.4" y="1118.64" width="1922" height="1.4" fill="#dde1e5"/><rect x="78.4" y="1163.12" width="1922" height="1.4" fill="#dde1e5"/></svg>
<div class="b" style="left:466.80px;top:185.00px;width:1.40px;height:1063.00px;background:#c6c8cc;"></div>
<div class="b" style="left:1986.30px;top:235.00px;width:10.40px;height:210.40px;background:rgba(0,0,0,0.195);border-radius:5.2px;"></div>
<div class="b" style="left:78.40px;top:1201.60px;width:1922.00px;height:46.40px;background:#fbfcfe;border-top:1.3px solid #dde1e5;"></div>
<div class="b" style="left:466.80px;top:1201.60px;width:1.50px;height:46.40px;background:#c9ccd1;"></div>
<span class="t" style="left:89.20px;top:1210.28px;height:20px;line-height:20px;font-size:15.6px;color:#1d1f25;letter-spacing:0.511px;-webkit-text-stroke:0.18px currentColor;">98 records</span>
<div class="b" style="left:82.10px;top:1233.30px;width:1631.00px;height:10.50px;background:#c8c9cb;border-radius:5.3px;"></div>
<div class="b" style="left:89.20px;top:1157.90px;width:184.30px;height:49.00px;background:#fff;border:1.3px solid #dfe1e5;border-radius:24.5px;box-shadow:0 1px 2px rgba(0,0,0,0.05);"></div>
<div class="b" style="left:151.30px;top:1158.50px;width:1.30px;height:47.80px;background:#dfe1e5;"></div>
<svg style="left:113.00px;top:1172.00px;" width="21.00" height="21.00" viewBox="-10.5 -10.5 21 21"><path d="M-8.3 0 H8.3 M0 -8.3 V8.3" stroke="#1d1f25" stroke-width="1.5" stroke-linecap="round"/></svg>
<svg style="left:170.00px;top:1172.00px;" width="22.00" height="21.00" viewBox="170 1172 22 21"><g fill="none" stroke="#1d1f25" stroke-width="1.5" stroke-linecap="round" stroke-linejoin="round"><path d="M172.6 1188 L185.6 1175 L188.4 1177.8 L175.4 1190.8 Z"/><path d="M182.6 1178 L185.4 1180.8"/><path d="M176.2 1173.8 V1177 M174.6 1175.4 H177.8" stroke-width="1.2"/><path d="M187.6 1183.6 V1187.6 M185.6 1185.6 H189.6" stroke-width="1.2"/><path d="M183.2 1187.6 V1190.4 M181.8 1189 H184.6" stroke-width="1.2"/></g></svg>
<span class="t" style="left:203.40px;top:1172.32px;height:23px;line-height:23px;font-size:18px;color:#1d1f25;letter-spacing:-0.206px;-webkit-text-stroke:0.4px currentColor;">Add...</span>
<svg style="left:26.80px;top:1083.80px;" width="22.40" height="22.40" viewBox="0 0 256 256"><g fill="none" stroke="#1d1f25" stroke-width="16" stroke-linecap="round" stroke-linejoin="round"><circle cx="128" cy="128" r="96"/><circle cx="128" cy="180" r="7" fill="#1d1f25"/><path d="M128,144v-8a28,28,0,1,0-28-28"/></g></svg>
<svg style="left:26.80px;top:1139.80px;" width="22.40" height="22.40" viewBox="0 0 256 256"><g fill="none" stroke="#1d1f25" stroke-width="16" stroke-linecap="round" stroke-linejoin="round"><path d="M56.2,104a71.9,71.9,0,0,1,72.3-72c39.6.3,71.3,33.2,71.3,72.9V112c0,35.8,7.5,56.6,14.1,68a8,8,0,0,1-6.9,12H49a8,8,0,0,1-6.9-12c6.600-11.4,14.1-32.2,14.1-68Z"/><path d="M96,192v8a32,32,0,0,0,64,0v-8"/></g></svg>
<div class="b" style="left:18.40px;top:1186.20px;width:39.20px;height:39.20px;background:#fff;border-radius:50%;box-shadow:0 0.5px 2px rgba(0,0,0,0.25);"></div>
<div class="b" style="left:19.90px;top:1187.70px;width:36.20px;height:36.20px;background:#dd04a8;border-radius:50%;"></div>
<span class="t" style="left:38.00px;top:1196.12px;height:23px;line-height:23px;font-size:18px;color:#fff;transform:translateX(-50%);-webkit-text-stroke:0.4px currentColor;">J</span>
<svg style="left:94.00px;top:87.00px;" width="20.00" height="21.00" viewBox="94 87 20 21"><rect x="102.9" y="91" width="1.1" height="2" fill="#5a6a7a"/><circle cx="103.4" cy="90.7" r="1.7" fill="#f5b50f"/><rect x="94.9" y="97" width="2.2" height="2.6" rx="0.6" fill="#e8534f"/><rect x="109.7" y="97" width="2.2" height="2.6" rx="0.6" fill="#e8534f"/><rect x="95.3" y="99.4" width="1.8" height="2.2" fill="#2b2f3a"/><rect x="109.7" y="99.4" width="1.8" height="2.2" fill="#2b2f3a"/><clipPath id="rb"><rect x="96.3" y="92.3" width="14" height="14.6" rx="2.6"/></clipPath><g clip-path="url(#rb)"><rect x="96" y="92" width="15" height="5.4" fill="#d7ecef"/><rect x="96" y="96.4" width="15" height="5.6" fill="#8eb0cc"/><rect x="96" y="101.6" width="15" height="6" fill="#0f9f98"/></g><circle cx="99.8" cy="97.9" r="2.1" fill="#19c3c8"/><circle cx="99.8" cy="98" r="1.05" fill="#fff"/><circle cx="106.9" cy="97.9" r="2.1" fill="#19c3c8"/><circle cx="106.9" cy="98" r="1.05" fill="#fff"/><path d="M103.4 98.2 L104.6 100.5 L102.2 100.5 Z" fill="#e8534f"/><rect x="100" y="101.9" width="6.6" height="1.7" rx="0.3" fill="#39465a"/><rect x="100.6" y="102.2" width="1.2" height="1.1" fill="#e6ecef"/><rect x="102.7" y="102.2" width="1.2" height="1.1" fill="#e6ecef"/><rect x="104.8" y="102.2" width="1.2" height="1.1" fill="#e6ecef"/></svg>
<svg style="left:417.00px;top:88.00px;" width="20.00" height="20.00" viewBox="-10 -10 20 20"><g opacity="0.82"><circle r="7.2" fill="none" stroke="#de3c3f" stroke-width="2"/><path d="M-5 -5 L5 5" stroke="#de3c3f" stroke-width="2"/></g></svg>
<svg style="left:606.00px;top:89.00px;" width="20.00" height="20.00" viewBox="-10 -10 20 20"><g opacity="0.85"><g transform="rotate(-45)"><rect x="-2.7" y="-11.4" width="5.4" height="3.4" rx="1.5" fill="#f2b8a4"/><rect x="-2.7" y="-9" width="5.4" height="2.6" fill="#7f8a9c"/><rect x="-2.7" y="-9" width="5.4" height="1.1" fill="#b9c6d6"/><rect x="-2.7" y="-6.4" width="5.4" height="12.4" fill="#fbcf1e"/><rect x="-1.2" y="-6.4" width="2.4" height="12.4" fill="#f6dc8c"/><path d="M-2.7 6 L0 11.6 L2.7 6 Z" fill="#f6d2be"/><path d="M-0.9 9.7 L0 11.6 L0.9 9.7 Z" fill="#4a4a4a"/></g></g></svg>
<svg style="left:857.40px;top:89.30px;" width="12.00" height="18.00" viewBox="-6 -9 12 18"><g transform="scale(0.98)" opacity="0.9"><path d="M-3.1 -4.3 Q-2.6 -6.6 0.4 -6.6 Q3.6 -6.6 3.6 -3.9 Q3.6 -2.4 1.6 -0.4 L-0.9 2.6" fill="none" stroke="#d93a3a" stroke-width="2.6" stroke-linecap="butt" stroke-linejoin="round"/><circle cx="-0.5" cy="5.9" r="1.7" fill="#d93a3a"/></g></svg>
<svg style="left:1124.00px;top:88.00px;" width="21.00" height="21.00" viewBox="1124 88 21 21"><rect x="1125.3" y="89" width="18.5" height="18.4" rx="3.8" fill="#b9cfe2"/><rect x="1125.6" y="91.6" width="17.9" height="15.8" rx="3.4" fill="#8da9dc"/><path d="M1132.8 93.8 L1131.6 103 M1137.2 93.8 L1136 103 M1129.8 96.6 H1139.4 M1129.4 100.2 H1139" stroke="#fff" stroke-width="1.7" fill="none"/></svg>
<svg style="left:1413.00px;top:89.00px;" width="19.00" height="20.00" viewBox="1413 89 19 20"><rect x="1414.1" y="90.3" width="16.8" height="17.4" rx="1.2" fill="#fdfdfd" stroke="#b9c2c8" stroke-width="0.6"/><path d="M1414.1 91.5 Q1414.1 90.3 1415.3 90.3 H1429.7 Q1430.9 90.3 1430.9 91.5 V97.2 H1414.1 Z" fill="#cfae98"/><circle cx="1418" cy="92.4" r="0.9" fill="#3a3d45"/><circle cx="1426.8" cy="92.4" r="0.9" fill="#3a3d45"/><rect x="1423" y="94" width="1.2" height="1.6" fill="#ee5a52"/><rect x="1416.4" y="94.3" width="1.6" height="1.5" fill="#bcd0dc"/><rect x="1419.2" y="94.3" width="1.6" height="1.5" fill="#bcd0dc"/><path d="M1424.6 107.4 Q1427.6 102.6 1430.9 101.2 V106 Q1430.9 107.4 1429.5 107.4 Z" fill="#b4b6ba"/><text x="1418.2" y="105.4" font-family="Liberation Sans, sans-serif" font-size="8.6" font-weight="700" fill="#55585f" letter-spacing="-0.5">17</text></svg>
</div></body></html>
